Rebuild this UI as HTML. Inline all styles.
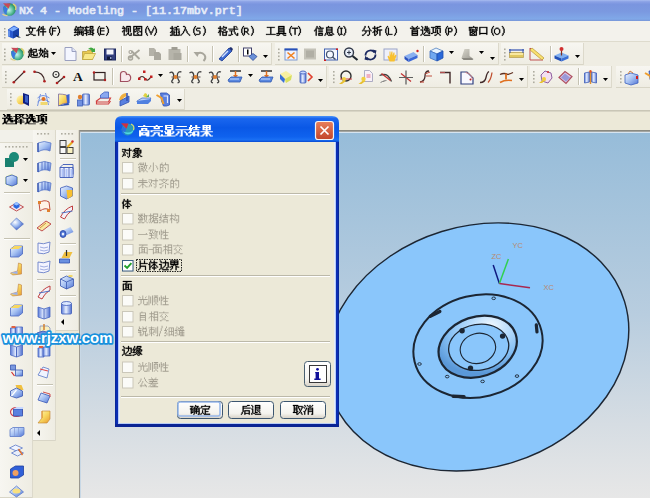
<!DOCTYPE html>
<html><head><meta charset="utf-8"><title>NX 4 - Modeling</title>
<style>html,body{margin:0;padding:0;width:650px;height:498px;overflow:hidden;background:#ece9d8;font-family:"Liberation Sans",sans-serif}</style>
</head><body><svg width="650" height="498" viewBox="0 0 650 498" style="display:block"><rect x="0" y="0" width="650" height="498" fill="#ece9d8"/><defs>
<linearGradient id="gTitle" x1="0" y1="0" x2="0" y2="1">
<stop offset="0" stop-color="#a8bcf0"/><stop offset="0.08" stop-color="#8ba2e6"/>
<stop offset="0.2" stop-color="#7a95df"/><stop offset="0.55" stop-color="#7b99e0"/>
<stop offset="0.9" stop-color="#80a8e8"/><stop offset="1" stop-color="#7896d8"/>
</linearGradient>
<linearGradient id="gView" x1="0" y1="0" x2="0" y2="1">
<stop offset="0" stop-color="#96bcd9"/><stop offset="0.5" stop-color="#b8cddf"/><stop offset="0.8" stop-color="#d6dde3"/><stop offset="1" stop-color="#e7e7e7"/>
</linearGradient>
<linearGradient id="gDlgTitle" x1="0" y1="0" x2="0" y2="1">
<stop offset="0" stop-color="#4a94f8"/><stop offset="0.1" stop-color="#1a66ee"/><stop offset="0.45" stop-color="#0a58e6"/><stop offset="0.8" stop-color="#0f62ee"/><stop offset="0.92" stop-color="#1a70f4"/><stop offset="1" stop-color="#0848d0"/>
</linearGradient>
<linearGradient id="gBtn" x1="0" y1="0" x2="0" y2="1">
<stop offset="0" stop-color="#ffffff"/><stop offset="0.7" stop-color="#f4f3ee"/><stop offset="1" stop-color="#d6d0c5"/>
</linearGradient>
<linearGradient id="gTb" x1="0" y1="0" x2="0" y2="1">
<stop offset="0" stop-color="#f7f6f1"/><stop offset="1" stop-color="#eeece2"/>
</linearGradient>
<linearGradient id="gTbV" x1="0" y1="0" x2="1" y2="0">
<stop offset="0" stop-color="#f7f6f1"/><stop offset="1" stop-color="#eeece2"/>
</linearGradient>
</defs><rect x="0" y="0" width="650" height="21" fill="url(#gTitle)"/><rect x="0" y="21" width="650" height="21" fill="#f3f2ec"/><rect x="0" y="41" width="650" height="1" fill="#dedbcd"/><rect x="0" y="42" width="650" height="69" fill="#efede3"/><rect x="0" y="111" width="650" height="19" fill="#ece9d8"/><rect x="0" y="110" width="650" height="1" fill="#c9c6b6"/><rect x="0" y="111" width="650" height="1" fill="#d8d5c5"/><rect x="0" y="130" width="80" height="368" fill="#ece9d8"/><rect x="80" y="130" width="570" height="368" fill="url(#gView)"/><rect x="79" y="130" width="571" height="1" fill="#8a8a82"/><rect x="79" y="131" width="571" height="1" fill="#a4a6a2"/><rect x="80" y="132" width="570" height="1" fill="#d6e4f0"/><rect x="79" y="130" width="1" height="368" fill="#9a9890"/><rect x="80" y="132" width="1" height="366" fill="#c8d8e6"/><rect x="2" y="43" width="270" height="22" fill="url(#gTb)"/><rect x="2" y="64" width="270" height="1" fill="#d8d5c6"/><rect x="271" y="43" width="1" height="22" fill="#dcd9cb"/><rect x="4" y="48.5" width="1.6" height="1.6" fill="#aeaca0"/><rect x="4" y="52.0" width="1.6" height="1.6" fill="#aeaca0"/><rect x="4" y="55.5" width="1.6" height="1.6" fill="#aeaca0"/><rect x="4" y="59.0" width="1.6" height="1.6" fill="#aeaca0"/><rect x="275" y="43" width="224" height="22" fill="url(#gTb)"/><rect x="275" y="64" width="224" height="1" fill="#d8d5c6"/><rect x="498" y="43" width="1" height="22" fill="#dcd9cb"/><rect x="278" y="48.5" width="1.6" height="1.6" fill="#aeaca0"/><rect x="278" y="52.0" width="1.6" height="1.6" fill="#aeaca0"/><rect x="278" y="55.5" width="1.6" height="1.6" fill="#aeaca0"/><rect x="278" y="59.0" width="1.6" height="1.6" fill="#aeaca0"/><rect x="501" y="43" width="83" height="22" fill="url(#gTb)"/><rect x="501" y="64" width="83" height="1" fill="#d8d5c6"/><rect x="583" y="43" width="1" height="22" fill="#dcd9cb"/><rect x="504" y="48.5" width="1.6" height="1.6" fill="#aeaca0"/><rect x="504" y="52.0" width="1.6" height="1.6" fill="#aeaca0"/><rect x="504" y="55.5" width="1.6" height="1.6" fill="#aeaca0"/><rect x="504" y="59.0" width="1.6" height="1.6" fill="#aeaca0"/><rect x="2" y="66" width="325" height="22" fill="url(#gTb)"/><rect x="2" y="87" width="325" height="1" fill="#d8d5c6"/><rect x="326" y="66" width="1" height="22" fill="#dcd9cb"/><rect x="5" y="71.0" width="1.6" height="1.6" fill="#aeaca0"/><rect x="5" y="74.5" width="1.6" height="1.6" fill="#aeaca0"/><rect x="5" y="78.0" width="1.6" height="1.6" fill="#aeaca0"/><rect x="5" y="81.5" width="1.6" height="1.6" fill="#aeaca0"/><rect x="329" y="66" width="199" height="22" fill="url(#gTb)"/><rect x="329" y="87" width="199" height="1" fill="#d8d5c6"/><rect x="527" y="66" width="1" height="22" fill="#dcd9cb"/><rect x="333" y="71.0" width="1.6" height="1.6" fill="#aeaca0"/><rect x="333" y="74.5" width="1.6" height="1.6" fill="#aeaca0"/><rect x="333" y="78.0" width="1.6" height="1.6" fill="#aeaca0"/><rect x="333" y="81.5" width="1.6" height="1.6" fill="#aeaca0"/><rect x="530" y="66" width="82" height="22" fill="url(#gTb)"/><rect x="530" y="87" width="82" height="1" fill="#d8d5c6"/><rect x="611" y="66" width="1" height="22" fill="#dcd9cb"/><rect x="533" y="71.0" width="1.6" height="1.6" fill="#aeaca0"/><rect x="533" y="74.5" width="1.6" height="1.6" fill="#aeaca0"/><rect x="533" y="78.0" width="1.6" height="1.6" fill="#aeaca0"/><rect x="533" y="81.5" width="1.6" height="1.6" fill="#aeaca0"/><rect x="616" y="66" width="40" height="22" fill="url(#gTb)"/><rect x="616" y="87" width="40" height="1" fill="#d8d5c6"/><rect x="655" y="66" width="1" height="22" fill="#dcd9cb"/><rect x="620" y="71.0" width="1.6" height="1.6" fill="#aeaca0"/><rect x="620" y="74.5" width="1.6" height="1.6" fill="#aeaca0"/><rect x="620" y="78.0" width="1.6" height="1.6" fill="#aeaca0"/><rect x="620" y="81.5" width="1.6" height="1.6" fill="#aeaca0"/><rect x="7" y="89" width="178" height="21" fill="url(#gTb)"/><rect x="7" y="109" width="178" height="1" fill="#d8d5c6"/><rect x="184" y="89" width="1" height="21" fill="#dcd9cb"/><rect x="10" y="93.0" width="1.6" height="1.6" fill="#aeaca0"/><rect x="10" y="96.5" width="1.6" height="1.6" fill="#aeaca0"/><rect x="10" y="100.0" width="1.6" height="1.6" fill="#aeaca0"/><rect x="10" y="103.5" width="1.6" height="1.6" fill="#aeaca0"/><rect x="121" y="46" width="1" height="16" fill="#c5c2b2"/><rect x="122" y="46" width="1" height="16" fill="#ffffff"/><rect x="187" y="46" width="1" height="16" fill="#c5c2b2"/><rect x="188" y="46" width="1" height="16" fill="#ffffff"/><rect x="212" y="46" width="1" height="16" fill="#c5c2b2"/><rect x="213" y="46" width="1" height="16" fill="#ffffff"/><rect x="238" y="46" width="1" height="16" fill="#c5c2b2"/><rect x="239" y="46" width="1" height="16" fill="#ffffff"/><rect x="423" y="46" width="1" height="16" fill="#c5c2b2"/><rect x="424" y="46" width="1" height="16" fill="#ffffff"/><rect x="550" y="46" width="1" height="16" fill="#c5c2b2"/><rect x="551" y="46" width="1" height="16" fill="#ffffff"/><rect x="112" y="68" width="1" height="17" fill="#c5c2b2"/><rect x="113" y="68" width="1" height="17" fill="#ffffff"/><rect x="578" y="68" width="1" height="17" fill="#c5c2b2"/><rect x="579" y="68" width="1" height="17" fill="#ffffff"/><rect x="0" y="130" width="33" height="13" fill="#f2f1ea"/><rect x="0" y="142" width="33" height="1" fill="#dddacc"/><rect x="0" y="143" width="33" height="355" fill="url(#gTbV)"/><rect x="0" y="497" width="33" height="1" fill="#d8d5c6"/><rect x="32" y="143" width="1" height="355" fill="#dcd9cb"/><rect x="5.0" y="146" width="1.6" height="1.6" fill="#aeaca0"/><rect x="8.5" y="146" width="1.6" height="1.6" fill="#aeaca0"/><rect x="12.0" y="146" width="1.6" height="1.6" fill="#aeaca0"/><rect x="15.5" y="146" width="1.6" height="1.6" fill="#aeaca0"/><rect x="19.0" y="146" width="1.6" height="1.6" fill="#aeaca0"/><rect x="22.5" y="146" width="1.6" height="1.6" fill="#aeaca0"/><rect x="26.0" y="146" width="1.6" height="1.6" fill="#aeaca0"/><rect x="33" y="130" width="23" height="311" fill="url(#gTbV)"/><rect x="33" y="440" width="23" height="1" fill="#d8d5c6"/><rect x="55" y="130" width="1" height="311" fill="#dcd9cb"/><rect x="37.0" y="133" width="1.6" height="1.6" fill="#aeaca0"/><rect x="40.5" y="133" width="1.6" height="1.6" fill="#aeaca0"/><rect x="44.0" y="133" width="1.6" height="1.6" fill="#aeaca0"/><rect x="47.5" y="133" width="1.6" height="1.6" fill="#aeaca0"/><rect x="56" y="130" width="23" height="201" fill="url(#gTbV)"/><rect x="56" y="330" width="23" height="1" fill="#d8d5c6"/><rect x="78" y="130" width="1" height="201" fill="#dcd9cb"/><rect x="61.0" y="133" width="1.6" height="1.6" fill="#aeaca0"/><rect x="64.5" y="133" width="1.6" height="1.6" fill="#aeaca0"/><rect x="68.0" y="133" width="1.6" height="1.6" fill="#aeaca0"/><rect x="71.5" y="133" width="1.6" height="1.6" fill="#aeaca0"/><rect x="4" y="192" width="26" height="1" fill="#c5c2b2"/><rect x="4" y="193" width="26" height="1" fill="#ffffff"/><rect x="4" y="238" width="26" height="1" fill="#c5c2b2"/><rect x="4" y="239" width="26" height="1" fill="#ffffff"/><rect x="37" y="279" width="16" height="1" fill="#c5c2b2"/><rect x="37" y="280" width="16" height="1" fill="#ffffff"/><rect x="37" y="384" width="16" height="1" fill="#c5c2b2"/><rect x="37" y="385" width="16" height="1" fill="#ffffff"/><rect x="60" y="158" width="16" height="1" fill="#c5c2b2"/><rect x="60" y="159" width="16" height="1" fill="#ffffff"/><rect x="60" y="243" width="16" height="1" fill="#c5c2b2"/><rect x="60" y="244" width="16" height="1" fill="#ffffff"/><rect x="60" y="270" width="16" height="1" fill="#c5c2b2"/><rect x="60" y="271" width="16" height="1" fill="#ffffff"/><rect x="60" y="295" width="16" height="1" fill="#c5c2b2"/><rect x="60" y="296" width="16" height="1" fill="#ffffff"/><defs>
<linearGradient id="gBlue" x1="0" y1="0" x2="1" y2="1"><stop offset="0" stop-color="#eef4ff"/><stop offset="0.5" stop-color="#a4c0f2"/><stop offset="1" stop-color="#5274d4"/></linearGradient>
<linearGradient id="gBlueH" x1="0" y1="0" x2="1" y2="0"><stop offset="0" stop-color="#5a7ad8"/><stop offset="0.45" stop-color="#e8f0ff"/><stop offset="1" stop-color="#5070d0"/></linearGradient>
<linearGradient id="gYel" x1="0" y1="0" x2="1" y2="1"><stop offset="0" stop-color="#fff8c0"/><stop offset="0.5" stop-color="#f8d860"/><stop offset="1" stop-color="#e89a30"/></linearGradient>
<linearGradient id="gGray" x1="0" y1="0" x2="1" y2="1"><stop offset="0" stop-color="#d8d6cc"/><stop offset="1" stop-color="#9a9890"/></linearGradient>
<radialGradient id="gSph" cx="0.35" cy="0.35" r="0.7"><stop offset="0" stop-color="#ffffff"/><stop offset="0.5" stop-color="#9ab8f0"/><stop offset="1" stop-color="#3858c0"/></radialGradient>
</defs><g transform="translate(10 47)"><defs><radialGradient id="gNx" cx="0.45" cy="0.55" r="0.6"><stop offset="0" stop-color="#c8f4f0"/><stop offset="0.6" stop-color="#50b890"/><stop offset="1" stop-color="#1a7a50"/></radialGradient></defs><circle cx="7.5" cy="7" r="6.3" fill="url(#gNx)"/><path d="M1.5 4q0 6 4 8.5q-3 -4 -1.5 -8z" fill="#2a68d0"/><path d="M1.5 4q-0.5 5 2.5 8q1 -4 2 -6z" fill="#3a78e0"/><path d="M1 0.8l7.5 0.3l-2 5.2z" fill="#c84858"/><path d="M11 1.5q4 2 2.5 6" stroke="#d8d070" stroke-width="1.4" fill="none"/><path d="M0.5 11.5q2 2 5 1.5" stroke="#e0d090" stroke-width="1.4" fill="none"/></g><g transform="translate(63.5 47)"><path d="M1.5 0.5h7l4 4v9h-11z" fill="#f4f6ff" stroke="#9aa0c0"/><path d="M8.5 0.5v4h4" fill="#dfe4f8" stroke="#9aa0c0"/></g><g transform="translate(82 47)"><path d="M0.5 4.5h4l1 -1h5v9h-10z" fill="#e8c850" stroke="#b8a040" stroke-width="0.8"/><path d="M0.5 12.5l2 -6h11l-3 6z" fill="#f8e888" stroke="#c0a840" stroke-width="0.8"/><path d="M6 2q3 -3 6 0l1 -1v4h-4l1 -1q-2 -2 -4 -2z" fill="#40a840"/></g><g transform="translate(104 48.5)"><rect x="0.5" y="0.5" width="11" height="11" fill="#34407e" stroke="#1c2860"/><rect x="2.5" y="1" width="7" height="5" fill="#f4f4fa"/><rect x="3" y="8" width="5" height="3.5" fill="#101838"/><rect x="6" y="8.5" width="1.5" height="2" fill="#90a0d0"/></g><g transform="translate(127.5 48)"><path d="M2 10l10 -8M4 3l8 8" stroke="#a8a69c" stroke-width="1.8"/><circle cx="3" cy="10" r="2" fill="none" stroke="#a8a69c" stroke-width="1.5"/><circle cx="3" cy="4" r="1.5" fill="none" stroke="#a8a69c" stroke-width="1.2"/></g><g transform="translate(149 48)"><path d="M0 0h5l2 2v6h-7z" fill="#b4b2a8"/><path d="M5 4h5l2 2v6h-7z" fill="#aaa89e"/></g><g transform="translate(168.5 47)"><rect x="0" y="2" width="12" height="11" fill="#b6b4aa"/><rect x="3" y="0" width="6" height="3" fill="#a09e94"/><rect x="5" y="6" width="8" height="7" fill="#aaa89e"/></g><g transform="translate(193.5 50)"><path d="M3 4q5 -3 8 1q2 3 -1 6" stroke="#a8a69c" stroke-width="2" fill="none"/><path d="M0 2l4 5l2 -5z" fill="#a8a69c"/></g><g transform="translate(218 47)"><path d="M1 12l3 2l10 -10l-3 -3z" fill="#3a68d0" stroke="#1a3890" stroke-width="0.8"/><path d="M4 10l6 -6" stroke="#d0e0ff" stroke-width="1.5"/><path d="M11 1l3 3l1 -2l-2 -2z" fill="#203070"/></g><g transform="translate(243 47.5)"><rect x="0.5" y="0.5" width="8" height="8" fill="#fff" stroke="#40406a"/><rect x="4" y="2" width="1.5" height="5" fill="#000"/><path d="M6 9l4 -3l4 3l-4 4z" fill="#6a90d8" stroke="#2a4a9a" stroke-width="0.8"/></g><g transform="translate(284.5 48.5)"><rect x="0.5" y="0.5" width="12" height="11" fill="#eef2ff" stroke="#7f9ad0"/><rect x="0" y="0" width="13" height="2" fill="#2850b8"/><path d="M3 4l7 6M10 4l-7 6" stroke="#f08020" stroke-width="1.6"/></g><g transform="translate(304 48.5)"><rect x="0" y="0" width="12" height="11" fill="#c4c2b8"/><rect x="2" y="2" width="8" height="7" fill="#b0aea4"/></g><g transform="translate(324 48.5)"><rect x="0.5" y="0.5" width="13" height="11" fill="#f4f8ff" stroke="#4060b0"/><circle cx="6" cy="6" r="3.5" fill="none" stroke="#40506a" stroke-width="1.2"/><path d="M8.5 8.5l3 2.5" stroke="#40506a" stroke-width="1.5"/><rect x="0" y="11" width="2" height="1.5" fill="#d02020"/><rect x="12" y="0" width="2" height="1.5" fill="#d02020"/></g><g transform="translate(343.5 47)"><circle cx="5.5" cy="5.5" r="4.5" fill="#e8eef8" stroke="#303848" stroke-width="1.4"/><path d="M9 9l5 4" stroke="#202830" stroke-width="2.2"/><path d="M3.5 5.5h4M5.5 3.5v4" stroke="#303848" stroke-width="1"/></g><g transform="translate(363.5 48.5)"><path d="M2 7a5 5 0 0 1 9 -3M12 6a5 5 0 0 1 -9 3" stroke="#1a2860" stroke-width="1.8" fill="none"/><path d="M9 1l4 1l-1 4z M5 12l-4 -1l1 -4z" fill="#1a2860"/></g><g transform="translate(383.5 48.5)"><rect x="0.5" y="0.5" width="13" height="11" fill="#eef0fa" stroke="#9aa4c8"/><path d="M6 13l-2 -5l1 -1l1 2v-6l1 0v4l1 -4l1 0v4l1 -3l1 0v4l1 -2l1 1l-2 6z" fill="#f8c030"/></g><g transform="translate(404.5 49)"><path d="M0 7l9 -4l4 3l-9 4z" fill="#8ab0f0"/><path d="M0 7l4 3v3l-4 -3z" fill="#2850c0"/><path d="M4 10l9 -4v3l-9 4z" fill="#3a68d8"/><circle cx="13" cy="2" r="1.2" fill="#d02020"/></g><g transform="translate(429 47)"><path d="M1 4l6 -3l7 3l-6 3z" fill="#e8f4ff" stroke="#5080c0" stroke-width="0.8"/><path d="M1 4v7l7 3v-7z" fill="#70a8f0" stroke="#4070c0" stroke-width="0.8"/><path d="M8 7v7l6 -3v-7z" fill="#2a68d8" stroke="#2050b0" stroke-width="0.8"/></g><g transform="translate(459.5 47)"><path d="M2 11l3 -9h5v7l4 3h-10z" fill="url(#gGray)"/><path d="M2 11h10l2 2h-10z" fill="#8a8880"/></g><g transform="translate(509 49)"><rect x="0.5" y="3.5" width="14" height="5" fill="#f8e8a0" stroke="#b8a050" stroke-width="0.8"/><path d="M0 1h15" stroke="#3050b0" stroke-width="1.2"/><path d="M1 0v4M14 0v4" stroke="#3050b0" stroke-width="1"/><rect x="1" y="6" width="13" height="2" fill="#e0c860"/></g><g transform="translate(529 47)"><path d="M1 13v-12l13 12z" fill="none" stroke="#c05050" stroke-width="1"/><path d="M3 1l12 10l-2 2l-12 -10z" fill="#f8e070" stroke="#c0a040" stroke-width="0.8"/></g><g transform="translate(554.5 46.5)"><path d="M0 9l7 -3l7 3l-7 3z" fill="#80b0f0"/><path d="M0 9v3l7 3v-3z" fill="#2050b8"/><path d="M7 12v3l7 -3v-3z" fill="#3a70d8"/><path d="M7 9v-6" stroke="#803020" stroke-width="1.2"/><circle cx="7" cy="2.5" r="2" fill="#d03030"/></g><g transform="translate(12 70)"><path d="M2 12l10 -10" stroke="#402828" stroke-width="1.1"/><circle cx="1.8" cy="12.2" r="1.3" fill="#b02020"/><circle cx="12.2" cy="1.8" r="1.3" fill="#b02020"/></g><g transform="translate(33 70)"><path d="M1.5 1.8q9 0 10 9.5" stroke="#402828" stroke-width="1.2" fill="none"/><circle cx="1.5" cy="1.8" r="1.3" fill="#b02020"/><circle cx="11.5" cy="11.3" r="1.3" fill="#b02020"/></g><g transform="translate(52 71)"><circle cx="4" cy="3.5" r="3" fill="none" stroke="#303030" stroke-width="1.2"/><circle cx="4" cy="3.5" r="0.8" fill="#303030"/><path d="M5 12l7 -6" stroke="#402828" stroke-width="1.2"/><circle cx="5" cy="12" r="1.3" fill="#b02020"/><circle cx="12" cy="6" r="1.3" fill="#b02020"/></g><g transform="translate(73 70)"><text x="0" y="10.5" font-family="Liberation Serif" font-weight="bold" font-size="13.5" fill="#101010">A</text></g><g transform="translate(92.5 71)"><rect x="1.5" y="1.5" width="11" height="7.5" fill="none" stroke="#302020" stroke-width="1.2"/><circle cx="1.5" cy="1.5" r="1.2" fill="#b02020"/><circle cx="12.5" cy="9" r="1.2" fill="#b02020"/></g><g transform="translate(118.5 70.5)"><path d="M2 11v-7q0 -3 3 -3q3 0 3 3q3 -1 4 2q1 4 -3 5z" fill="#f8e8ec" stroke="#a05060" stroke-width="1.2"/></g><g transform="translate(138 70.5)"><path d="M1 8q3 -4 6 0q3 4 6 -2" stroke="#402828" stroke-width="1.2" fill="none"/><rect x="0" y="7" width="2.5" height="2.5" fill="#c02020"/><rect x="6" y="7.5" width="2.5" height="2.5" fill="#c02020"/><rect x="12" y="5" width="2.5" height="2.5" fill="#c02020"/><rect x="5" y="0" width="2.5" height="2.5" fill="#c02020"/></g><g transform="translate(168.5 70)"><path d="M1 3q3 -2 4 1q1 4 -1 6q-2 2 1 3" stroke="#404040" stroke-width="1.3" fill="none"/><path d="M13 2q-3 -1 -4 2q-1 3 1 6q2 2 -1 3" stroke="#404040" stroke-width="1.3" fill="none"/><path d="M3 7h9" stroke="#605050" stroke-width="1"/><circle cx="7" cy="7" r="2" fill="#e08030"/></g><g transform="translate(188.5 70)"><path d="M1 3q3 -2 4 1q1 4 -1 6q-2 2 1 3" stroke="#404040" stroke-width="1.3" fill="none"/><path d="M13 2q-3 -1 -4 2q-1 3 1 6q2 2 -1 3" stroke="#404040" stroke-width="1.3" fill="none"/><path d="M3 7h9" stroke="#605050" stroke-width="1"/><circle cx="7" cy="7" r="2" fill="#e08030"/></g><g transform="translate(208 70)"><path d="M1 3q3 -2 4 1q1 4 -1 6q-2 2 1 3" stroke="#404040" stroke-width="1.3" fill="none"/><path d="M13 2q-3 -1 -4 2q-1 3 1 6q2 2 -1 3" stroke="#404040" stroke-width="1.3" fill="none"/><path d="M3 7h9" stroke="#605050" stroke-width="1"/><circle cx="7" cy="7" r="2" fill="#e08030"/></g><g transform="translate(228 70)"><path d="M2 1h11" stroke="#303030" stroke-width="1.5"/><path d="M7.5 1v5" stroke="#e07020" stroke-width="1.5"/><path d="M5 5l2.5 3l2.5 -3z" fill="#e07020"/><path d="M0 10l3 -3h11l-2 5h-11z" fill="#5a88e0" stroke="#3058b0" stroke-width="0.8"/><path d="M2 9h9" stroke="#c8dcff" stroke-width="1"/></g><g transform="translate(259 70)"><path d="M2 1h11" stroke="#303030" stroke-width="1.5"/><path d="M7.5 1v5" stroke="#e07020" stroke-width="1.5"/><path d="M5 5l2.5 3l2.5 -3z" fill="#e07020"/><path d="M0 10l3 -3h11l-2 5h-11z" fill="#5a88e0" stroke="#3058b0" stroke-width="0.8"/><path d="M2 9h9" stroke="#c8dcff" stroke-width="1"/></g><g transform="translate(279 70)"><path d="M1 4l6 -3l6 4l-6 8z" fill="#f8f0a0"/><path d="M1 4l5 5l-1 4l-4 -4z" fill="#3a70d8"/><path d="M6 9l7 -4l-1 5l-5 3z" fill="#d8e060"/></g><g transform="translate(299 70)"><rect x="1" y="2" width="6" height="11" rx="1" fill="url(#gBlueH)" stroke="#3a58b8" stroke-width="0.8"/><ellipse cx="4" cy="2.5" rx="3" ry="1.5" fill="#c8d8ff" stroke="#3a58b8" stroke-width="0.8"/><path d="M9 3l4 4l-4 4" stroke="#e04030" stroke-width="1.6" fill="none"/></g><g transform="translate(338 70)"><circle cx="8" cy="6" r="5" fill="none" stroke="#303030" stroke-width="1.4"/><path d="M2 9h12" stroke="#d04040" stroke-width="1"/><path d="M1 14l5 -4l2 1l-4 3z" fill="#e8c030"/><circle cx="6" cy="9" r="2" fill="#f0d040"/></g><g transform="translate(358.5 70)"><path d="M6 0.5h5l3 3v8h-8z" fill="#f8f0f8" stroke="#9a9ab8" stroke-width="0.8"/><rect x="8" y="4" width="4" height="4" fill="#f0b0c0"/><path d="M0 14l5 -4l2 1l-4 3z" fill="#e8c030"/><circle cx="5" cy="9" r="2.2" fill="#f0d040"/></g><g transform="translate(378.5 70.5)"><path d="M1 5q5 -2 8 0q3 3 4 6" stroke="#404040" stroke-width="1.3" fill="none"/><path d="M3 3l9 7" stroke="#c03030" stroke-width="1.3"/><path d="M2 12q3 -2 6 -2" stroke="#909090" stroke-width="1"/></g><g transform="translate(399 70.5)"><path d="M7 0v14" stroke="#606060" stroke-width="1.3"/><path d="M2 3l10 8" stroke="#c03030" stroke-width="1.3"/><path d="M0 7h14" stroke="#606060" stroke-width="1"/></g><g transform="translate(419 70)"><path d="M10 1q-4 0 -4 5q0 5 -5 6" stroke="#402828" stroke-width="1.3" fill="none"/><path d="M7 6h6M6 4l5 -2" stroke="#c05040" stroke-width="1"/><path d="M1 12h4" stroke="#c05040" stroke-width="1.2"/></g><g transform="translate(439 70.5)"><path d="M1 2h10v11" stroke="#402828" stroke-width="1.4" fill="none"/><path d="M1 2h5" stroke="#b05050" stroke-width="1.2"/></g><g transform="translate(459.5 70.5)"><path d="M1.5 1.5h6l6 6v6h-12z" fill="#f8f8ff" stroke="#304080" stroke-width="1.2"/><path d="M6 2q6 1 7 7" stroke="#d08080" stroke-width="1" fill="none"/><circle cx="11" cy="9" r="1" fill="#c02020"/></g><g transform="translate(479 70.5)"><path d="M1 12q5 0 6 -5q1 -5 3 -6" stroke="#402828" stroke-width="1.3" fill="none"/><path d="M9 12q3 -3 4 -10" stroke="#c05030" stroke-width="1.3" fill="none"/></g><g transform="translate(499 70.5)"><path d="M1 4q4 -2 8 0q3 -1 5 -2" stroke="#603020" stroke-width="1.3" fill="none"/><path d="M7 3v6" stroke="#e07020" stroke-width="1.8"/><path d="M1 12q5 -3 12 -2" stroke="#e07020" stroke-width="1.6" fill="none"/></g><g transform="translate(538 70)"><path d="M3 5l4 -4l6 2l1 5l-4 5l-6 -2z" fill="#f4e0f0" stroke="#9060a0" stroke-width="1"/><path d="M1 13l5 -4l2 1l-4 3z" fill="#e8c030"/><circle cx="6" cy="9" r="2" fill="#f0d040"/><circle cx="10" cy="2" r="1" fill="#d03030"/></g><g transform="translate(558 70.5)"><path d="M1 7l6 -6l7 5l-6 7z" fill="#d8c8e8" stroke="#b05060" stroke-width="1.2"/><path d="M3 7l4 -4l5 4l-4 4z" fill="#9a98d8"/></g><g transform="translate(583.5 70)"><path d="M1 3l5 -1v10l-5 1z" fill="url(#gBlueH)" stroke="#4060b8" stroke-width="0.8"/><path d="M8 2l5 1v10l-5 -1z" fill="url(#gBlueH)" stroke="#4060b8" stroke-width="0.8"/><path d="M7 0v14" stroke="#e09030" stroke-width="1.4"/><circle cx="7" cy="1.5" r="1.2" fill="#e05030"/></g><g transform="translate(624 70)"><path d="M1 5l6 -2l7 2v8l-7 2l-6 -2z" fill="url(#gBlue)" stroke="#3a60c0" stroke-width="0.8"/><path d="M4 4l2 -3l3 2" stroke="#d08040" stroke-width="1" fill="none"/><rect x="12" y="6" width="2" height="3" fill="#d02020"/></g><g transform="translate(645 70)"><path d="M4 1h6l3 2v10l-3 1h-3l-2 -5z" fill="#5a80e0" stroke="#3050b0" stroke-width="0.8"/><path d="M0 3l5 3l2 6" stroke="#f0a030" stroke-width="2" fill="none"/><path d="M7 4h4v7" stroke="#dfe8ff" stroke-width="1.2" fill="none"/></g><g transform="translate(16 92)"><circle cx="5" cy="8" r="4.5" fill="url(#gYel)"/><path d="M7 1l6 2v11l-6 -3z" fill="#102080"/><path d="M9 3l3 1v7l-3 -1z" fill="#3a60c8"/></g><g transform="translate(36.5 92)"><path d="M1 6q5 -5 12 0M1 10q5 -5 12 0M4 2l-3 12M9 1l3 12" stroke="#6a8ae0" stroke-width="0.9" fill="none"/><circle cx="7" cy="7" r="2" fill="#e07020"/><path d="M4 10h7v3h-7z" fill="#f0d870"/></g><g transform="translate(56.5 92)"><path d="M2 2q4 0 8 1l1 8q-4 0 -9 3z" fill="url(#gYel)" stroke="#7a6aa0" stroke-width="0.8"/><path d="M10 3l3 -1v9l-2 2z" fill="#3a60d0"/><path d="M2 14l9 -3l2 2l-9 1z" fill="#2850b0"/></g><g transform="translate(76.5 92)"><rect x="6" y="2" width="7" height="11" rx="1" fill="url(#gBlueH)" stroke="#4060b8" stroke-width="0.8"/><circle cx="3.5" cy="5" r="2.2" fill="#e08030"/><rect x="1" y="8" width="5" height="6" fill="#7090e0" stroke="#4060b8" stroke-width="0.8"/></g><g transform="translate(96.5 92)"><path d="M0 9l4 -3h10l-2 4h-11z" fill="none" stroke="#d04040" stroke-width="1.2"/><path d="M0 9v3h12l2 -3" fill="none" stroke="#d04040" stroke-width="1.2"/><path d="M4 3l4 -3h4v6h-8z" fill="#8aa8f0" stroke="#4060c0" stroke-width="0.8"/></g><g transform="translate(117 92)"><path d="M2 8q1 -6 7 -7l1 3q-4 1 -5 5z" fill="#f0b040"/><path d="M3 9l9 -5v6l-9 4z" fill="#5a80e0" stroke="#3050b0" stroke-width="0.8"/><path d="M10 1v8" stroke="#3050b0" stroke-width="1.5"/></g><g transform="translate(137 92)"><path d="M0 9l5 -3h9l-3 4h-11z" fill="#bcd0f8" stroke="#4a70c8" stroke-width="0.8"/><path d="M0 9v3h11l3 -3v-2" fill="#5080e0"/><path d="M6 4l2 -3l2 1v4z" fill="#e0d040"/><path d="M9 5l3 -3v3z" fill="#60b060"/></g><g transform="translate(156.5 92)"><path d="M4 1h6l3 2v10l-3 1h-3l-2 -5z" fill="#5a80e0" stroke="#3050b0" stroke-width="0.8"/><path d="M0 3l5 3l2 6" stroke="#f0a030" stroke-width="2" fill="none"/><path d="M7 4h4v7" stroke="#dfe8ff" stroke-width="1.2" fill="none"/></g><g transform="translate(5 152)"><rect x="0" y="6" width="9" height="9" fill="#1a8070"/><circle cx="9" cy="5" r="5" fill="#1a8a78"/></g><g transform="translate(5 173)"><path d="M0 4l6 -3l7 3v7l-7 3l-6 -3z" fill="#e0f0a0"/><path d="M1 4l6 -2l5 2v7l-5 2l-6 -2z" fill="url(#gBlue)" stroke="#3858b8" stroke-width="0.8"/></g><g transform="translate(9.5 198)"><path d="M0 9l7 -4l7 4l-7 4z" fill="#f4e8f0" stroke="#c05050" stroke-width="1"/><path d="M4 6l3 -2l3 2v3l-3 2l-3 -2z" fill="#2a68e0"/><path d="M4 6l3 -2l3 2l-3 1.5z" fill="#9ac0ff"/></g><g transform="translate(9.5 217)"><path d="M1 7l6 -6l7 6l-7 6z" fill="url(#gSph)" stroke="#5070c0" stroke-width="0.6"/></g><g transform="translate(9.5 244)"><path d="M1 5l4 -3h8v8l-4 3h-8z" fill="url(#gBlue)" stroke="#4a68c0" stroke-width="0.8"/><path d="M1 5l4 -3h8l-4 3z" fill="#f8d860"/></g><g transform="translate(9.5 262)"><path d="M9 1l3 1v10l-9 1l-2 -2l7 -2z" fill="url(#gYel)" stroke="#c08040" stroke-width="0.6"/><path d="M1 11l7 -2v3z" fill="#9ab0f0"/></g><g transform="translate(9.5 283)"><path d="M9 1l3 1v10l-9 1l-2 -2l7 -2z" fill="url(#gYel)" stroke="#c08040" stroke-width="0.6"/><path d="M1 11l7 -2v3z" fill="#9ab0f0"/></g><g transform="translate(9.5 303)"><path d="M1 5l4 -3h8v8l-4 3h-8z" fill="url(#gBlue)" stroke="#4a68c0" stroke-width="0.8"/><path d="M1 5l4 -3h8l-4 3z" fill="#f8d860"/></g><g transform="translate(9.5 323)"><path d="M1 5h6v9h-6z" fill="url(#gBlueH)" stroke="#4a68c0" stroke-width="0.8"/><path d="M6 4h7v9h-7z" fill="url(#gBlueH)" stroke="#4a68c0" stroke-width="0.8"/><path d="M2 3h4v2h-4z" fill="#e06040"/></g><g transform="translate(9.5 343)"><path d="M1 2l6 2l6 -2v10l-6 2l-6 -2z" fill="url(#gBlueH)" stroke="#4a68c0" stroke-width="0.8"/><path d="M7 4v10" stroke="#4a68c0" stroke-width="1"/></g><g transform="translate(9.5 363)"><path d="M1 2h5v5h-5z" fill="#7a98e0" stroke="#3a58b0" stroke-width="0.8"/><path d="M6 7h7v6h-7z" fill="url(#gBlue)" stroke="#3a58b0" stroke-width="0.8"/><path d="M2 9l3 4" stroke="#d03030" stroke-width="1.2"/></g><g transform="translate(9.5 384)"><path d="M6 1h6l2 5h-6z" fill="#f0c040"/><path d="M1 7l6 -3l6 3v5l-6 2l-6 -2z" fill="url(#gBlue)" stroke="#3a58b0" stroke-width="0.8"/><path d="M2 12l5 -6" stroke="#ffffff" stroke-width="1.2"/></g><g transform="translate(9.5 405)"><ellipse cx="7" cy="7" rx="6" ry="4.5" fill="none" stroke="#d04050" stroke-width="1.2"/><path d="M4 4h9v7h-9z" fill="#5a80e0" stroke="#3050b0" stroke-width="0.8"/><path d="M4 4l3 -2h7l-1 2z" fill="#c8d8ff"/></g><g transform="translate(9.5 425)"><path d="M0.5 4.5l3 -2h11v7l-3 2h-11z" fill="url(#gBlue)" stroke="#5a78c8" stroke-width="0.8"/><path d="M5 3v8M9 3v8" stroke="#8aa0d8" stroke-width="0.8"/></g><g transform="translate(9.5 444)"><path d="M0 4l6 -3l7 3l-6 3z" fill="#f0f4ff" stroke="#5a78c8" stroke-width="0.8"/><path d="M2 9l6 -3l6 3l-6 3z" fill="#e8eefa" stroke="#5a78c8" stroke-width="0.8"/><path d="M9 5l4 6" stroke="#e07030" stroke-width="1.4"/></g><g transform="translate(9.5 465)"><path d="M1 4l5 -3h8v9l-5 3h-8z" fill="#3060d8" stroke="#2040a0" stroke-width="0.8"/><circle cx="6" cy="8" r="3" fill="#f0a060"/></g><g transform="translate(9.5 484)"><path d="M0 8l7 -6l7 6l-7 5z" fill="url(#gBlue)" stroke="#5a78c8" stroke-width="0.8"/><ellipse cx="7" cy="7" rx="4" ry="2.5" fill="#f8e080"/></g><g transform="translate(37 140)"><path d="M1 3q6 -3 13 0l-1 8q-6 -3 -12 1z" fill="url(#gBlue)" stroke="#5a78c8" stroke-width="0.8"/><path d="M1 3q0 5 0 9" stroke="#2848a8" stroke-width="1.2"/></g><g transform="translate(37 160)"><path d="M1 3q6 -3 13 0l-1 8q-6 -3 -12 1z" fill="url(#gBlue)" stroke="#5a78c8" stroke-width="0.8"/><path d="M1 3q0 5 0 9" stroke="#2848a8" stroke-width="1.2"/><path d="M5 2v8M8 1.5v8M11 2v8" stroke="#3a58b8" stroke-width="0.7"/></g><g transform="translate(37 180)"><path d="M1 3q6 -3 13 0l-1 8q-6 -3 -12 1z" fill="url(#gBlue)" stroke="#5a78c8" stroke-width="0.8"/><path d="M1 3q0 5 0 9" stroke="#2848a8" stroke-width="1.2"/><path d="M5 2v8M8 1.5v8M11 2v8" stroke="#3a58b8" stroke-width="0.7"/></g><g transform="translate(37 199)"><path d="M2 4q5 -4 10 -1l1 8q-5 -3 -10 1z" fill="#fff4e8" stroke="#c05040" stroke-width="1"/><rect x="1" y="2" width="3" height="3" fill="#e08030"/><rect x="10" y="10" width="3" height="3" fill="#e08030"/></g><g transform="translate(37 219)"><path d="M0 9l9 -7l5 3l-9 7z" fill="#f8e8a0" stroke="#c05050" stroke-width="1"/><path d="M3 9l6 -5" stroke="#d09040" stroke-width="1"/></g><g transform="translate(37 241)"><path d="M1 2q5 2 12 -1l-1 10q-5 3 -11 1z" fill="#f4f4ff" stroke="#6a80c8" stroke-width="0.9"/><path d="M3 6q4 2 8 0M3 9q4 2 8 0" stroke="#8a9ad8" stroke-width="0.8" fill="none"/></g><g transform="translate(37 260)"><path d="M1 2q5 2 12 -1l-1 10q-5 3 -11 1z" fill="#f4f4ff" stroke="#6a80c8" stroke-width="0.9"/><path d="M3 6q4 2 8 0M3 9q4 2 8 0" stroke="#8a9ad8" stroke-width="0.8" fill="none"/></g><g transform="translate(37 285)"><path d="M1 12q4 -8 12 -11l0 4q-6 4 -8 9z" fill="#f4f0f8" stroke="#c04040" stroke-width="1"/><path d="M2 8l11 -2" stroke="#5070c0" stroke-width="1"/></g><g transform="translate(37 305)"><path d="M1 2l6 2l6 -2v10l-6 2l-6 -2z" fill="url(#gBlueH)" stroke="#4a68c0" stroke-width="0.8"/><path d="M7 4v10" stroke="#4a68c0" stroke-width="1"/></g><g transform="translate(37 324)"><path d="M3 2h8l2 2v6h-8l-2 -2z" fill="#f8f0c0" stroke="#8090c0" stroke-width="0.8"/><path d="M0 9l6 -2l7 2v3l-7 2l-6 -2z" fill="#7090e0" stroke="#3050b0" stroke-width="0.8"/><path d="M7 0v6" stroke="#d08030" stroke-width="1.5"/></g><g transform="translate(37 343)"><path d="M1 5h6v9h-6z" fill="url(#gBlueH)" stroke="#4a68c0" stroke-width="0.8"/><path d="M6 4h7v9h-7z" fill="url(#gBlueH)" stroke="#4a68c0" stroke-width="0.8"/><path d="M2 3h4v2h-4z" fill="#e06040"/></g><g transform="translate(37 365)"><path d="M1 10l5 -8l6 2l-2 9z" fill="#f0f4ff" stroke="#5a78c8" stroke-width="0.8"/><path d="M3 4l8 2" stroke="#e04040" stroke-width="1"/></g><g transform="translate(37 391)"><path d="M1 9l3 -7l9 3l-3 7z" fill="url(#gBlue)" stroke="#3a58b8" stroke-width="0.8"/><path d="M6 1l7 2v3" stroke="#d05050" stroke-width="1" fill="none"/></g><g transform="translate(37 410)"><path d="M5 1h8v8l-3 4h-9l4 -5z" fill="url(#gYel)" stroke="#c08030" stroke-width="0.6"/><path d="M5 1v7" stroke="#e09030" stroke-width="1"/></g><g transform="translate(59.5 140)"><rect x="0.5" y="0.5" width="6" height="6" fill="#f0f0f0" stroke="#404040"/><rect x="0.5" y="7.5" width="6" height="6" fill="#f8f8f8" stroke="#404040"/><rect x="7.5" y="7.5" width="6" height="6" fill="#f8f0c0" stroke="#404040"/><path d="M8 7l5 -5" stroke="#e8b020" stroke-width="2.2"/><circle cx="13" cy="1.5" r="1.2" fill="#d03030"/></g><g transform="translate(59.5 164)"><path d="M0.5 3.5h13v10h-13z" fill="#eef2ff" stroke="#3a58b8" stroke-width="0.9"/><path d="M4.5 3.5v10M9.5 3.5v10" stroke="#3a58b8" stroke-width="0.9"/><path d="M0.5 3.5l3 -3h10v10l-0 0" fill="none" stroke="#3a58b8" stroke-width="0.9"/><path d="M2 5h2v8h-2zM6 5h2v8h-2zM11 5h2v8h-2z" fill="#b0c4f8"/></g><g transform="translate(59.5 185)"><path d="M1 3l6 -2l6 2v8l-6 3l-6 -3z" fill="url(#gBlue)" stroke="#3a58b8" stroke-width="0.8"/><path d="M7 5h6v6l-5 3z" fill="#f8c030"/></g><g transform="translate(59.5 205)"><path d="M1 12q4 -8 12 -11l0 4q-6 4 -8 9z" fill="#f4f0f8" stroke="#c04040" stroke-width="1"/><path d="M2 8l11 -2" stroke="#5070c0" stroke-width="1"/></g><g transform="translate(59.5 225)"><path d="M2 6l9 -4l3 5l-9 4z" fill="url(#gBlue)"/><ellipse cx="3.5" cy="9" rx="3" ry="3.5" fill="#4a70d0" stroke="#2a48a8" stroke-width="0.8"/><ellipse cx="3.5" cy="9" rx="1.3" ry="1.6" fill="#e8f0ff"/></g><g transform="translate(59.5 250)"><path d="M2 8l3 -6h8l-3 6z" fill="#f0c040"/><path d="M0 9h10v4h-10z" fill="#6a90e0" stroke="#3050b0" stroke-width="0.8"/><path d="M7 0v6" stroke="#303030" stroke-width="1.2"/></g><g transform="translate(59.5 275)"><path d="M1 4l6 -3l7 3v7l-7 3l-6 -3z" fill="url(#gBlue)" stroke="#3a58b0" stroke-width="0.8"/><path d="M1 4l6 3l7 -3M7 7v7" stroke="#3a58b0" stroke-width="0.8" fill="none"/><path d="M9 1l4 0" stroke="#f0d040" stroke-width="1.5"/></g><g transform="translate(59.5 301)"><rect x="2" y="2" width="10" height="11" rx="1" fill="url(#gBlueH)" stroke="#3a58b8" stroke-width="0.8"/><ellipse cx="7" cy="2.5" rx="5" ry="2" fill="#dce8ff" stroke="#3a58b8" stroke-width="0.8"/></g><path d="M51 52h5l-2.5 3z" fill="#000"/><path d="M263 55h5l-2.5 3z" fill="#000"/><path d="M449 51h5l-2.5 3z" fill="#000"/><path d="M479 51h5l-2.5 3z" fill="#000"/><path d="M490 57h5l-2.5 3z" fill="#000"/><path d="M575 55h5l-2.5 3z" fill="#000"/><path d="M158 74h5l-2.5 3z" fill="#000"/><path d="M248 74h5l-2.5 3z" fill="#000"/><path d="M318 79h5l-2.5 3z" fill="#000"/><path d="M519 78h5l-2.5 3z" fill="#000"/><path d="M603 78h5l-2.5 3z" fill="#000"/><path d="M177 99h5l-2.5 3z" fill="#000"/><path d="M23 158h5l-2.5 3z" fill="#000"/><path d="M23 179h5l-2.5 3z" fill="#000"/><path d="M64 319v6l-3 -3z" fill="#000"/><path d="M40 430v6l-3 -3z" fill="#000"/><path fill="#000" stroke="#000" stroke-width="0.3"  transform="translate(26.00 24.25) scale(0.875)" d="M4 2h1v1h-1zM15 2h1v1h-1zM19 2h1v1h-1zM5 3h1v1h-1zM15 3h1v1h-1zM17 3h1v1h-1zM19 3h1v1h-1zM0 4h11v1h-11zM14 4h1v1h-1zM17 4h1v1h-1zM19 4h1v1h-1zM3 5h1v1h-1zM7 5h1v1h-1zM14 5h1v1h-1zM16 5h6v1h-6zM3 6h1v1h-1zM7 6h1v1h-1zM13 6h3v1h-3zM19 6h1v1h-1zM3 7h1v1h-1zM7 7h1v1h-1zM12 7h1v1h-1zM14 7h1v1h-1zM19 7h1v1h-1zM4 8h1v1h-1zM6 8h1v1h-1zM14 8h1v1h-1zM16 8h7v1h-7zM4 9h1v1h-1zM6 9h1v1h-1zM14 9h1v1h-1zM19 9h1v1h-1zM5 10h1v1h-1zM14 10h1v1h-1zM19 10h1v1h-1zM3 11h2v1h-2zM6 11h2v1h-2zM14 11h1v1h-1zM19 11h1v1h-1zM0 12h3v1h-3zM8 12h3v1h-3zM14 12h1v1h-1zM19 12h1v1h-1z"/><path fill="#000" stroke="#000" stroke-width="0.3"  transform="translate(48.50 24.25) scale(0.875)" d="M3 2h1v1h-1zM10 2h1v1h-1zM2 3h1v1h-1zM11 3h1v1h-1zM2 4h1v1h-1zM4 4h5v1h-5zM11 4h1v1h-1zM1 5h1v1h-1zM4 5h1v1h-1zM12 5h1v1h-1zM1 6h1v1h-1zM4 6h1v1h-1zM12 6h1v1h-1zM1 7h1v1h-1zM4 7h4v1h-4zM12 7h1v1h-1zM1 8h1v1h-1zM4 8h1v1h-1zM12 8h1v1h-1zM1 9h1v1h-1zM4 9h1v1h-1zM12 9h1v1h-1zM2 10h1v1h-1zM4 10h1v1h-1zM11 10h1v1h-1zM2 11h1v1h-1zM4 11h1v1h-1zM11 11h1v1h-1zM3 12h1v1h-1zM10 12h1v1h-1z"/><path fill="#000" stroke="#000" stroke-width="0.3"  transform="translate(74.00 24.25) scale(0.875)" d="M2 2h1v1h-1zM7 2h1v1h-1zM14 2h1v1h-1zM18 2h4v1h-4zM2 3h1v1h-1zM4 3h7v1h-7zM12 3h5v1h-5zM18 3h1v1h-1zM21 3h1v1h-1zM1 4h1v1h-1zM4 4h1v1h-1zM10 4h1v1h-1zM13 4h1v1h-1zM18 4h4v1h-4zM1 5h1v1h-1zM3 5h8v1h-8zM13 5h2v1h-2zM0 6h3v1h-3zM4 6h1v1h-1zM12 6h1v1h-1zM14 6h1v1h-1zM17 6h6v1h-6zM2 7h1v1h-1zM4 7h7v1h-7zM12 7h5v1h-5zM18 7h1v1h-1zM21 7h1v1h-1zM1 8h1v1h-1zM4 8h1v1h-1zM6 8h1v1h-1zM8 8h1v1h-1zM10 8h1v1h-1zM14 8h1v1h-1zM18 8h2v1h-2zM21 8h1v1h-1zM0 9h11v1h-11zM14 9h3v1h-3zM18 9h1v1h-1zM20 9h2v1h-2zM4 10h1v1h-1zM6 10h1v1h-1zM8 10h1v1h-1zM10 10h1v1h-1zM12 10h3v1h-3zM18 10h1v1h-1zM21 10h2v1h-2zM2 11h3v1h-3zM6 11h1v1h-1zM8 11h1v1h-1zM10 11h1v1h-1zM14 11h1v1h-1zM16 11h6v1h-6zM0 12h2v1h-2zM4 12h1v1h-1zM9 12h2v1h-2zM14 12h1v1h-1zM21 12h1v1h-1z"/><path fill="#000" stroke="#000" stroke-width="0.3"  transform="translate(96.50 24.25) scale(0.875)" d="M3 2h1v1h-1zM11 2h1v1h-1zM2 3h1v1h-1zM12 3h1v1h-1zM2 4h1v1h-1zM4 4h5v1h-5zM12 4h1v1h-1zM1 5h1v1h-1zM4 5h1v1h-1zM13 5h1v1h-1zM1 6h1v1h-1zM4 6h1v1h-1zM13 6h1v1h-1zM1 7h1v1h-1zM4 7h5v1h-5zM13 7h1v1h-1zM1 8h1v1h-1zM4 8h1v1h-1zM13 8h1v1h-1zM1 9h1v1h-1zM4 9h1v1h-1zM13 9h1v1h-1zM2 10h1v1h-1zM4 10h1v1h-1zM12 10h1v1h-1zM2 11h1v1h-1zM4 11h5v1h-5zM12 11h1v1h-1zM3 12h1v1h-1zM11 12h1v1h-1z"/><path fill="#000" stroke="#000" stroke-width="0.3"  transform="translate(122.00 24.25) scale(0.875)" d="M1 2h1v1h-1zM5 2h5v1h-5zM13 2h10v1h-10zM2 3h1v1h-1zM5 3h1v1h-1zM9 3h1v1h-1zM13 3h1v1h-1zM16 3h1v1h-1zM22 3h1v1h-1zM0 4h4v1h-4zM5 4h1v1h-1zM7 4h1v1h-1zM9 4h1v1h-1zM13 4h1v1h-1zM16 4h5v1h-5zM22 4h1v1h-1zM3 5h1v1h-1zM5 5h1v1h-1zM7 5h1v1h-1zM9 5h1v1h-1zM13 5h1v1h-1zM15 5h2v1h-2zM19 5h1v1h-1zM22 5h1v1h-1zM2 6h1v1h-1zM5 6h1v1h-1zM7 6h1v1h-1zM9 6h1v1h-1zM13 6h2v1h-2zM17 6h2v1h-2zM22 6h1v1h-1zM1 7h3v1h-3zM5 7h1v1h-1zM7 7h1v1h-1zM9 7h1v1h-1zM13 7h1v1h-1zM16 7h1v1h-1zM19 7h1v1h-1zM22 7h1v1h-1zM0 8h1v1h-1zM2 8h1v1h-1zM5 8h1v1h-1zM7 8h1v1h-1zM9 8h1v1h-1zM13 8h3v1h-3zM17 8h1v1h-1zM20 8h3v1h-3zM2 9h1v1h-1zM7 9h1v1h-1zM13 9h1v1h-1zM18 9h1v1h-1zM22 9h1v1h-1zM2 10h1v1h-1zM6 10h2v1h-2zM10 10h1v1h-1zM13 10h1v1h-1zM17 10h1v1h-1zM22 10h1v1h-1zM2 11h1v1h-1zM5 11h1v1h-1zM7 11h1v1h-1zM10 11h1v1h-1zM13 11h1v1h-1zM18 11h1v1h-1zM22 11h1v1h-1zM2 12h1v1h-1zM4 12h1v1h-1zM8 12h3v1h-3zM13 12h10v1h-10z"/><path fill="#000" stroke="#000" stroke-width="0.3"  transform="translate(144.50 24.25) scale(0.875)" d="M3 2h1v1h-1zM11 2h1v1h-1zM2 3h1v1h-1zM12 3h1v1h-1zM2 4h1v1h-1zM4 4h1v1h-1zM10 4h1v1h-1zM12 4h1v1h-1zM1 5h1v1h-1zM4 5h1v1h-1zM10 5h1v1h-1zM13 5h1v1h-1zM1 6h1v1h-1zM5 6h1v1h-1zM9 6h1v1h-1zM13 6h1v1h-1zM1 7h1v1h-1zM5 7h1v1h-1zM9 7h1v1h-1zM13 7h1v1h-1zM1 8h1v1h-1zM6 8h1v1h-1zM8 8h1v1h-1zM13 8h1v1h-1zM1 9h1v1h-1zM6 9h1v1h-1zM8 9h1v1h-1zM13 9h1v1h-1zM2 10h1v1h-1zM7 10h1v1h-1zM12 10h1v1h-1zM2 11h1v1h-1zM7 11h1v1h-1zM12 11h1v1h-1zM3 12h1v1h-1zM11 12h1v1h-1z"/><path fill="#000" stroke="#000" stroke-width="0.3"  transform="translate(170.00 24.25) scale(0.875)" d="M2 2h1v1h-1zM8 2h2v1h-2zM15 2h2v1h-2zM2 3h1v1h-1zM5 3h3v1h-3zM17 3h1v1h-1zM0 4h4v1h-4zM7 4h1v1h-1zM17 4h1v1h-1zM2 5h1v1h-1zM4 5h7v1h-7zM17 5h1v1h-1zM2 6h1v1h-1zM7 6h1v1h-1zM16 6h1v1h-1zM18 6h1v1h-1zM2 7h2v1h-2zM5 7h1v1h-1zM7 7h1v1h-1zM9 7h2v1h-2zM16 7h1v1h-1zM18 7h1v1h-1zM1 8h2v1h-2zM4 8h1v1h-1zM7 8h1v1h-1zM10 8h1v1h-1zM15 8h1v1h-1zM19 8h1v1h-1zM0 9h1v1h-1zM2 9h1v1h-1zM4 9h2v1h-2zM7 9h1v1h-1zM9 9h2v1h-2zM15 9h1v1h-1zM19 9h1v1h-1zM2 10h1v1h-1zM4 10h1v1h-1zM7 10h1v1h-1zM10 10h1v1h-1zM14 10h1v1h-1zM20 10h1v1h-1zM2 11h1v1h-1zM4 11h1v1h-1zM7 11h1v1h-1zM10 11h1v1h-1zM13 11h1v1h-1zM21 11h1v1h-1zM0 12h3v1h-3zM4 12h7v1h-7zM12 12h1v1h-1zM22 12h1v1h-1z"/><path fill="#000" stroke="#000" stroke-width="0.3"  transform="translate(192.50 24.25) scale(0.875)" d="M3 2h1v1h-1zM12 2h1v1h-1zM2 3h1v1h-1zM13 3h1v1h-1zM2 4h1v1h-1zM5 4h4v1h-4zM13 4h1v1h-1zM1 5h1v1h-1zM4 5h1v1h-1zM14 5h1v1h-1zM1 6h1v1h-1zM4 6h1v1h-1zM14 6h1v1h-1zM1 7h1v1h-1zM5 7h3v1h-3zM14 7h1v1h-1zM1 8h1v1h-1zM8 8h1v1h-1zM14 8h1v1h-1zM1 9h1v1h-1zM8 9h1v1h-1zM14 9h1v1h-1zM2 10h1v1h-1zM8 10h1v1h-1zM13 10h1v1h-1zM2 11h1v1h-1zM4 11h4v1h-4zM13 11h1v1h-1zM3 12h1v1h-1zM12 12h1v1h-1z"/><path fill="#000" stroke="#000" stroke-width="0.3"  transform="translate(218.00 24.25) scale(0.875)" d="M2 2h1v1h-1zM6 2h1v1h-1zM18 2h1v1h-1zM20 2h1v1h-1zM2 3h1v1h-1zM6 3h4v1h-4zM18 3h1v1h-1zM21 3h1v1h-1zM0 4h4v1h-4zM5 4h1v1h-1zM9 4h1v1h-1zM18 4h1v1h-1zM2 5h1v1h-1zM4 5h1v1h-1zM6 5h1v1h-1zM8 5h1v1h-1zM12 5h11v1h-11zM2 6h1v1h-1zM7 6h1v1h-1zM18 6h1v1h-1zM1 7h3v1h-3zM6 7h1v1h-1zM8 7h1v1h-1zM13 7h4v1h-4zM18 7h1v1h-1zM1 8h2v1h-2zM4 8h2v1h-2zM9 8h2v1h-2zM15 8h1v1h-1zM18 8h1v1h-1zM0 9h1v1h-1zM2 9h1v1h-1zM5 9h5v1h-5zM15 9h1v1h-1zM19 9h1v1h-1zM2 10h1v1h-1zM5 10h1v1h-1zM9 10h1v1h-1zM15 10h1v1h-1zM19 10h1v1h-1zM22 10h1v1h-1zM2 11h1v1h-1zM5 11h1v1h-1zM9 11h1v1h-1zM15 11h2v1h-2zM20 11h1v1h-1zM22 11h1v1h-1zM2 12h1v1h-1zM5 12h5v1h-5zM12 12h3v1h-3zM21 12h2v1h-2z"/><path fill="#000" stroke="#000" stroke-width="0.3"  transform="translate(240.50 24.25) scale(0.875)" d="M3 2h1v1h-1zM12 2h1v1h-1zM2 3h1v1h-1zM13 3h1v1h-1zM2 4h1v1h-1zM4 4h4v1h-4zM13 4h1v1h-1zM1 5h1v1h-1zM4 5h1v1h-1zM8 5h1v1h-1zM14 5h1v1h-1zM1 6h1v1h-1zM4 6h1v1h-1zM8 6h1v1h-1zM14 6h1v1h-1zM1 7h1v1h-1zM4 7h1v1h-1zM8 7h1v1h-1zM14 7h1v1h-1zM1 8h1v1h-1zM4 8h4v1h-4zM14 8h1v1h-1zM1 9h1v1h-1zM4 9h1v1h-1zM7 9h1v1h-1zM14 9h1v1h-1zM2 10h1v1h-1zM4 10h1v1h-1zM8 10h1v1h-1zM13 10h1v1h-1zM2 11h1v1h-1zM4 11h1v1h-1zM9 11h1v1h-1zM13 11h1v1h-1zM3 12h1v1h-1zM12 12h1v1h-1z"/><path fill="#000" stroke="#000" stroke-width="0.3"  transform="translate(266.00 24.25) scale(0.875)" d="M14 2h7v1h-7zM1 3h9v1h-9zM14 3h1v1h-1zM20 3h1v1h-1zM5 4h1v1h-1zM14 4h7v1h-7zM5 5h1v1h-1zM14 5h1v1h-1zM20 5h1v1h-1zM5 6h1v1h-1zM14 6h7v1h-7zM5 7h1v1h-1zM14 7h1v1h-1zM20 7h1v1h-1zM5 8h1v1h-1zM14 8h7v1h-7zM5 9h1v1h-1zM14 9h1v1h-1zM20 9h1v1h-1zM5 10h1v1h-1zM12 10h11v1h-11zM0 11h11v1h-11zM15 11h1v1h-1zM19 11h1v1h-1zM12 12h3v1h-3zM20 12h3v1h-3z"/><path fill="#000" stroke="#000" stroke-width="0.3"  transform="translate(288.50 24.25) scale(0.875)" d="M3 2h1v1h-1zM11 2h1v1h-1zM2 3h1v1h-1zM12 3h1v1h-1zM2 4h1v1h-1zM4 4h7v1h-7zM12 4h1v1h-1zM1 5h1v1h-1zM7 5h1v1h-1zM13 5h1v1h-1zM1 6h1v1h-1zM7 6h1v1h-1zM13 6h1v1h-1zM1 7h1v1h-1zM7 7h1v1h-1zM13 7h1v1h-1zM1 8h1v1h-1zM7 8h1v1h-1zM13 8h1v1h-1zM1 9h1v1h-1zM7 9h1v1h-1zM13 9h1v1h-1zM2 10h1v1h-1zM7 10h1v1h-1zM12 10h1v1h-1zM2 11h1v1h-1zM7 11h1v1h-1zM12 11h1v1h-1zM3 12h1v1h-1zM11 12h1v1h-1z"/><path fill="#000" stroke="#000" stroke-width="0.3"  transform="translate(314.00 24.25) scale(0.875)" d="M3 2h1v1h-1zM6 2h1v1h-1zM16 2h1v1h-1zM3 3h1v1h-1zM7 3h1v1h-1zM14 3h7v1h-7zM2 4h1v1h-1zM4 4h7v1h-7zM14 4h1v1h-1zM20 4h1v1h-1zM2 5h1v1h-1zM14 5h7v1h-7zM1 6h2v1h-2zM5 6h5v1h-5zM14 6h1v1h-1zM20 6h1v1h-1zM0 7h1v1h-1zM2 7h1v1h-1zM14 7h7v1h-7zM2 8h1v1h-1zM5 8h5v1h-5zM14 8h1v1h-1zM20 8h1v1h-1zM2 9h1v1h-1zM14 9h7v1h-7zM2 10h1v1h-1zM5 10h5v1h-5zM13 10h1v1h-1zM15 10h1v1h-1zM17 10h1v1h-1zM21 10h1v1h-1zM2 11h1v1h-1zM5 11h1v1h-1zM9 11h1v1h-1zM13 11h1v1h-1zM15 11h1v1h-1zM18 11h1v1h-1zM20 11h1v1h-1zM22 11h1v1h-1zM2 12h1v1h-1zM5 12h5v1h-5zM12 12h1v1h-1zM16 12h5v1h-5z"/><path fill="#000" stroke="#000" stroke-width="0.3"  transform="translate(336.50 24.25) scale(0.875)" d="M3 2h1v1h-1zM8 2h1v1h-1zM2 3h1v1h-1zM9 3h1v1h-1zM2 4h1v1h-1zM4 4h3v1h-3zM9 4h1v1h-1zM1 5h1v1h-1zM5 5h1v1h-1zM10 5h1v1h-1zM1 6h1v1h-1zM5 6h1v1h-1zM10 6h1v1h-1zM1 7h1v1h-1zM5 7h1v1h-1zM10 7h1v1h-1zM1 8h1v1h-1zM5 8h1v1h-1zM10 8h1v1h-1zM1 9h1v1h-1zM5 9h1v1h-1zM10 9h1v1h-1zM2 10h1v1h-1zM5 10h1v1h-1zM9 10h1v1h-1zM2 11h1v1h-1zM4 11h3v1h-3zM9 11h1v1h-1zM3 12h1v1h-1zM8 12h1v1h-1z"/><path fill="#000" stroke="#000" stroke-width="0.3"  transform="translate(362.00 24.25) scale(0.875)" d="M3 2h1v1h-1zM7 2h1v1h-1zM14 2h1v1h-1zM20 2h2v1h-2zM3 3h1v1h-1zM7 3h1v1h-1zM14 3h1v1h-1zM17 3h3v1h-3zM2 4h1v1h-1zM8 4h1v1h-1zM12 4h6v1h-6zM2 5h1v1h-1zM8 5h1v1h-1zM14 5h1v1h-1zM17 5h1v1h-1zM1 6h1v1h-1zM9 6h1v1h-1zM14 6h1v1h-1zM17 6h6v1h-6zM0 7h1v1h-1zM2 7h7v1h-7zM10 7h1v1h-1zM14 7h2v1h-2zM17 7h1v1h-1zM20 7h1v1h-1zM4 8h1v1h-1zM8 8h1v1h-1zM13 8h2v1h-2zM16 8h2v1h-2zM20 8h1v1h-1zM4 9h1v1h-1zM8 9h1v1h-1zM12 9h1v1h-1zM14 9h1v1h-1zM17 9h1v1h-1zM20 9h1v1h-1zM3 10h1v1h-1zM8 10h1v1h-1zM14 10h1v1h-1zM17 10h1v1h-1zM20 10h1v1h-1zM2 11h1v1h-1zM8 11h1v1h-1zM14 11h1v1h-1zM16 11h1v1h-1zM20 11h1v1h-1zM0 12h2v1h-2zM6 12h2v1h-2zM14 12h2v1h-2zM20 12h1v1h-1z"/><path fill="#000" stroke="#000" stroke-width="0.3"  transform="translate(384.50 24.25) scale(0.875)" d="M3 2h1v1h-1zM11 2h1v1h-1zM2 3h1v1h-1zM12 3h1v1h-1zM2 4h1v1h-1zM4 4h1v1h-1zM12 4h1v1h-1zM1 5h1v1h-1zM4 5h1v1h-1zM13 5h1v1h-1zM1 6h1v1h-1zM4 6h1v1h-1zM13 6h1v1h-1zM1 7h1v1h-1zM4 7h1v1h-1zM13 7h1v1h-1zM1 8h1v1h-1zM4 8h1v1h-1zM13 8h1v1h-1zM1 9h1v1h-1zM4 9h1v1h-1zM13 9h1v1h-1zM2 10h1v1h-1zM4 10h1v1h-1zM12 10h1v1h-1zM2 11h1v1h-1zM4 11h5v1h-5zM12 11h1v1h-1zM3 12h1v1h-1zM11 12h1v1h-1z"/><path fill="#000" stroke="#000" stroke-width="0.3"  transform="translate(410.00 24.25) scale(0.875)" d="M2 2h1v1h-1zM8 2h1v1h-1zM13 2h1v1h-1zM17 2h1v1h-1zM19 2h1v1h-1zM29 2h6v1h-6zM3 3h1v1h-1zM7 3h1v1h-1zM14 3h1v1h-1zM17 3h1v1h-1zM19 3h1v1h-1zM24 3h5v1h-5zM31 3h1v1h-1zM0 4h11v1h-11zM14 4h1v1h-1zM17 4h5v1h-5zM26 4h1v1h-1zM29 4h6v1h-6zM4 5h1v1h-1zM16 5h1v1h-1zM19 5h1v1h-1zM26 5h1v1h-1zM29 5h1v1h-1zM34 5h1v1h-1zM2 6h7v1h-7zM12 6h3v1h-3zM16 6h7v1h-7zM26 6h1v1h-1zM29 6h1v1h-1zM31 6h1v1h-1zM34 6h1v1h-1zM2 7h1v1h-1zM8 7h1v1h-1zM14 7h1v1h-1zM18 7h1v1h-1zM20 7h1v1h-1zM26 7h1v1h-1zM29 7h1v1h-1zM31 7h1v1h-1zM34 7h1v1h-1zM2 8h7v1h-7zM14 8h1v1h-1zM18 8h1v1h-1zM20 8h1v1h-1zM22 8h1v1h-1zM26 8h1v1h-1zM29 8h1v1h-1zM31 8h1v1h-1zM34 8h1v1h-1zM2 9h1v1h-1zM8 9h1v1h-1zM14 9h1v1h-1zM17 9h1v1h-1zM20 9h1v1h-1zM22 9h1v1h-1zM26 9h4v1h-4zM31 9h1v1h-1zM34 9h1v1h-1zM2 10h7v1h-7zM14 10h1v1h-1zM16 10h1v1h-1zM21 10h2v1h-2zM24 10h2v1h-2zM31 10h2v1h-2zM2 11h1v1h-1zM8 11h1v1h-1zM13 11h1v1h-1zM15 11h1v1h-1zM30 11h1v1h-1zM33 11h1v1h-1zM2 12h7v1h-7zM12 12h1v1h-1zM16 12h7v1h-7zM28 12h2v1h-2zM34 12h1v1h-1z"/><path fill="#000" stroke="#000" stroke-width="0.3"  transform="translate(444.50 24.25) scale(0.875)" d="M3 2h1v1h-1zM11 2h1v1h-1zM2 3h1v1h-1zM12 3h1v1h-1zM2 4h1v1h-1zM4 4h4v1h-4zM12 4h1v1h-1zM1 5h1v1h-1zM4 5h1v1h-1zM8 5h1v1h-1zM13 5h1v1h-1zM1 6h1v1h-1zM4 6h1v1h-1zM8 6h1v1h-1zM13 6h1v1h-1zM1 7h1v1h-1zM4 7h1v1h-1zM8 7h1v1h-1zM13 7h1v1h-1zM1 8h1v1h-1zM4 8h4v1h-4zM13 8h1v1h-1zM1 9h1v1h-1zM4 9h1v1h-1zM13 9h1v1h-1zM2 10h1v1h-1zM4 10h1v1h-1zM12 10h1v1h-1zM2 11h1v1h-1zM4 11h1v1h-1zM12 11h1v1h-1zM3 12h1v1h-1zM11 12h1v1h-1z"/><path fill="#000" stroke="#000" stroke-width="0.3"  transform="translate(468.00 24.25) scale(0.875)" d="M6 2h1v1h-1zM1 3h10v1h-10zM13 3h9v1h-9zM1 4h1v1h-1zM3 4h1v1h-1zM8 4h1v1h-1zM10 4h1v1h-1zM13 4h1v1h-1zM21 4h1v1h-1zM2 5h1v1h-1zM5 5h1v1h-1zM9 5h1v1h-1zM13 5h1v1h-1zM21 5h1v1h-1zM1 6h10v1h-10zM13 6h1v1h-1zM21 6h1v1h-1zM2 7h1v1h-1zM5 7h1v1h-1zM9 7h1v1h-1zM13 7h1v1h-1zM21 7h1v1h-1zM2 8h1v1h-1zM4 8h6v1h-6zM13 8h1v1h-1zM21 8h1v1h-1zM2 9h3v1h-3zM7 9h1v1h-1zM9 9h1v1h-1zM13 9h1v1h-1zM21 9h1v1h-1zM2 10h1v1h-1zM5 10h2v1h-2zM9 10h1v1h-1zM13 10h9v1h-9zM2 11h1v1h-1zM4 11h1v1h-1zM7 11h1v1h-1zM9 11h1v1h-1zM13 11h1v1h-1zM21 11h1v1h-1zM2 12h8v1h-8z"/><path fill="#000" stroke="#000" stroke-width="0.3"  transform="translate(490.50 24.25) scale(0.875)" d="M3 2h1v1h-1zM13 2h1v1h-1zM2 3h1v1h-1zM14 3h1v1h-1zM2 4h1v1h-1zM6 4h3v1h-3zM14 4h1v1h-1zM1 5h1v1h-1zM5 5h1v1h-1zM9 5h1v1h-1zM15 5h1v1h-1zM1 6h1v1h-1zM4 6h1v1h-1zM10 6h1v1h-1zM15 6h1v1h-1zM1 7h1v1h-1zM4 7h1v1h-1zM10 7h1v1h-1zM15 7h1v1h-1zM1 8h1v1h-1zM4 8h1v1h-1zM10 8h1v1h-1zM15 8h1v1h-1zM1 9h1v1h-1zM4 9h1v1h-1zM10 9h1v1h-1zM15 9h1v1h-1zM2 10h1v1h-1zM5 10h1v1h-1zM9 10h1v1h-1zM14 10h1v1h-1zM2 11h1v1h-1zM6 11h3v1h-3zM14 11h1v1h-1zM3 12h1v1h-1zM13 12h1v1h-1z"/><path fill="#000" stroke="#000" stroke-width="0.3"  transform="translate(28.00 46.25) scale(0.875)" d="M3 2h1v1h-1zM14 2h1v1h-1zM19 2h1v1h-1zM3 3h1v1h-1zM6 3h4v1h-4zM14 3h1v1h-1zM19 3h1v1h-1zM1 4h5v1h-5zM9 4h1v1h-1zM12 4h5v1h-5zM18 4h1v1h-1zM21 4h1v1h-1zM3 5h1v1h-1zM9 5h1v1h-1zM14 5h1v1h-1zM16 5h1v1h-1zM18 5h1v1h-1zM22 5h1v1h-1zM0 6h10v1h-10zM14 6h1v1h-1zM16 6h7v1h-7zM3 7h1v1h-1zM6 7h1v1h-1zM13 7h1v1h-1zM16 7h1v1h-1zM1 8h1v1h-1zM3 8h1v1h-1zM6 8h1v1h-1zM10 8h1v1h-1zM13 8h1v1h-1zM15 8h1v1h-1zM18 8h5v1h-5zM1 9h1v1h-1zM3 9h4v1h-4zM10 9h1v1h-1zM14 9h2v1h-2zM18 9h1v1h-1zM22 9h1v1h-1zM1 10h1v1h-1zM3 10h1v1h-1zM6 10h5v1h-5zM14 10h1v1h-1zM16 10h1v1h-1zM18 10h1v1h-1zM22 10h1v1h-1zM0 11h1v1h-1zM2 11h2v1h-2zM13 11h1v1h-1zM16 11h1v1h-1zM18 11h5v1h-5zM0 12h1v1h-1zM4 12h7v1h-7zM12 12h1v1h-1zM18 12h1v1h-1zM22 12h1v1h-1z"/><path fill="#000" stroke="#000" stroke-width="0.3" stroke-opacity="0" transform="translate(2.00 112.12) scale(0.940)" d="M1 2h2v1h-2zM5 2h4v1h-4zM14 2h10v1h-10zM25 2h2v1h-2zM29 2h4v1h-4zM41 2h7v1h-7zM2 3h2v1h-2zM5 3h4v1h-4zM14 3h2v1h-2zM18 3h2v1h-2zM21 3h2v1h-2zM26 3h2v1h-2zM29 3h4v1h-4zM36 3h6v1h-6zM43 3h2v1h-2zM2 4h2v1h-2zM5 4h6v1h-6zM12 4h6v1h-6zM19 4h3v1h-3zM26 4h2v1h-2zM29 4h6v1h-6zM38 4h2v1h-2zM41 4h7v1h-7zM4 5h2v1h-2zM7 5h2v1h-2zM14 5h2v1h-2zM18 5h2v1h-2zM21 5h2v1h-2zM28 5h2v1h-2zM31 5h2v1h-2zM38 5h2v1h-2zM41 5h2v1h-2zM46 5h2v1h-2zM0 6h12v1h-12zM14 6h5v1h-5zM22 6h14v1h-14zM38 6h2v1h-2zM41 6h4v1h-4zM46 6h2v1h-2zM2 7h2v1h-2zM6 7h4v1h-4zM14 7h3v1h-3zM19 7h2v1h-2zM26 7h2v1h-2zM30 7h4v1h-4zM38 7h2v1h-2zM41 7h4v1h-4zM46 7h2v1h-2zM2 8h2v1h-2zM6 8h6v1h-6zM13 8h3v1h-3zM17 8h6v1h-6zM26 8h2v1h-2zM30 8h6v1h-6zM38 8h2v1h-2zM41 8h4v1h-4zM46 8h2v1h-2zM2 9h2v1h-2zM5 9h2v1h-2zM8 9h8v1h-8zM19 9h2v1h-2zM26 9h2v1h-2zM29 9h2v1h-2zM32 9h4v1h-4zM38 9h7v1h-7zM46 9h2v1h-2zM2 10h4v1h-4zM9 10h3v1h-3zM14 10h10v1h-10zM26 10h4v1h-4zM33 10h6v1h-6zM43 10h3v1h-3zM1 11h4v1h-4zM14 11h2v1h-2zM19 11h2v1h-2zM25 11h4v1h-4zM42 11h2v1h-2zM45 11h2v1h-2zM0 12h2v1h-2zM4 12h12v1h-12zM19 12h2v1h-2zM24 12h2v1h-2zM28 12h8v1h-8zM40 12h3v1h-3zM46 12h2v1h-2z"/><text x="19" y="14.4" font-family="Liberation Mono" font-size="11.67" fill="#e4ebf8" stroke="#e4ebf8" stroke-width="0.7">NX 4 - Modeling - [11.17mbv.prt]</text><g transform="translate(2 2.5)"><defs><radialGradient id="gNx" cx="0.45" cy="0.55" r="0.6"><stop offset="0" stop-color="#c8f4f0"/><stop offset="0.6" stop-color="#50b890"/><stop offset="1" stop-color="#1a7a50"/></radialGradient></defs><circle cx="7.5" cy="7" r="6.3" fill="url(#gNx)"/><path d="M1.5 4q0 6 4 8.5q-3 -4 -1.5 -8z" fill="#2a68d0"/><path d="M1.5 4q-0.5 5 2.5 8q1 -4 2 -6z" fill="#3a78e0"/><path d="M1 0.8l7.5 0.3l-2 5.2z" fill="#c84858"/><path d="M11 1.5q4 2 2.5 6" stroke="#d8d070" stroke-width="1.4" fill="none"/><path d="M0.5 11.5q2 2 5 1.5" stroke="#e0d090" stroke-width="1.4" fill="none"/></g><rect x="4" y="28" width="1.5" height="1.5" fill="#a8a69c"/><rect x="4" y="31" width="1.5" height="1.5" fill="#a8a69c"/><rect x="4" y="34" width="1.5" height="1.5" fill="#a8a69c"/><rect x="4" y="37" width="1.5" height="1.5" fill="#a8a69c"/><g transform="translate(7 25.5)"><path d="M1 4l6 -4l5 3v7l-6 3l-5 -2z" fill="#2a5ad0"/><path d="M2 4l5 -3l4 2l-5 3z" fill="#80b0ff"/><path d="M6 6l6 -3v7l-6 3z" fill="#1840a8"/><path d="M8 9l6 3l-3 0z" fill="#102040"/><path d="M2 5v6" stroke="#a0c8ff" stroke-width="1"/></g><defs><radialGradient id="gRec" cx="0.72" cy="0.25" r="0.75"><stop offset="0" stop-color="#f4faff"/><stop offset="0.35" stop-color="#b8dcfc"/><stop offset="0.7" stop-color="#86c0f4"/><stop offset="1" stop-color="#5a98d8"/></radialGradient></defs><ellipse cx="477.3" cy="346.9" rx="154.1" ry="120.8" transform="rotate(-17.1 477.3 346.9)" fill="#8ac6fb" stroke="#1c2633" stroke-width="1.45"/><ellipse cx="478" cy="346.1" rx="65.3" ry="50.8" transform="rotate(-13.8 478 346.1)" fill="none" stroke="#1c2633" stroke-width="2"/><ellipse cx="477.7" cy="346.7" rx="40" ry="29.9" transform="rotate(-18.6 477.7 346.7)" fill="url(#gRec)" stroke="#1c2633" stroke-width="2.2"/><ellipse cx="478.7" cy="347.3" rx="30.2" ry="22.9" transform="rotate(-9 478.7 347.3)" fill="#8ac6fb" stroke="#1c2633" stroke-width="1.3"/><ellipse cx="477.9" cy="348.4" rx="17.9" ry="15" transform="rotate(-15.1 477.9 348.4)" fill="none" stroke="#1c2633" stroke-width="1.1"/><circle cx="462.1" cy="330.8" r="2.7" fill="#1c2633"/><circle cx="502.6" cy="336.1" r="2.7" fill="#1c2633"/><circle cx="470.5" cy="368.1" r="2.7" fill="#1c2633"/><ellipse cx="493.7" cy="298.3" rx="1.8" ry="1.3" fill="none" stroke="#1c2633" stroke-width="0.9"/><ellipse cx="419.5" cy="364" rx="1.8" ry="1.3" fill="none" stroke="#1c2633" stroke-width="0.9"/><ellipse cx="447.2" cy="376.6" rx="1.8" ry="1.3" fill="none" stroke="#1c2633" stroke-width="0.9"/><ellipse cx="482.6" cy="381.4" rx="1.8" ry="1.3" fill="none" stroke="#1c2633" stroke-width="0.9"/><ellipse cx="517" cy="376.1" rx="1.8" ry="1.3" fill="none" stroke="#1c2633" stroke-width="0.9"/><path d="M430.3 316.3L439.9 311.5" stroke="#1c2633" stroke-width="3.2" stroke-linecap="round"/><path d="M536.3 324.8L537 332" stroke="#1c2633" stroke-width="3.2" stroke-linecap="round"/><path d="M453.2 396.2L464 396.6" stroke="#1c2633" stroke-width="3.4" stroke-linecap="round"/><path d="M499.4 283.5L493.2 265" stroke="#101a80" stroke-width="1.5" fill="none"/><path d="M499.4 283.5L508.4 259" stroke="#30d050" stroke-width="1.5" fill="none"/><path d="M499.4 283.5L530 287.8" stroke="#a82850" stroke-width="1.6" fill="none"/><text x="491.5" y="258.5" font-family="Liberation Sans" font-size="7.5" fill="#b88a70">ZC</text><text x="512.5" y="248" font-family="Liberation Sans" font-size="7.5" fill="#b88a70">YC</text><text x="543.5" y="290" font-family="Liberation Sans" font-size="7.5" fill="#b88a70">XC</text><rect x="115" y="126" width="224" height="301" fill="#0a2db4"/><rect x="115" y="126" width="1" height="301" fill="#08289a"/><rect x="338" y="126" width="1" height="301" fill="#08289a"/><rect x="115" y="424" width="224" height="3" fill="#0a2494"/><path d="M115 142v-19q0 -7 7 -7h210q7 0 7 7v19z" fill="url(#gDlgTitle)"/><rect x="118" y="142" width="218" height="282" fill="#b8ccf4"/><rect x="119" y="142" width="216" height="281" fill="#e4ecfa"/><rect x="120" y="142" width="214" height="281" fill="#ece9d8"/><defs><linearGradient id="gClose" x1="0" y1="0" x2="0" y2="1"><stop offset="0" stop-color="#e8805c"/><stop offset="1" stop-color="#c2452a"/></linearGradient></defs><rect x="315.5" y="121.5" width="18" height="18" rx="2.5" fill="url(#gClose)" stroke="#f4f4f4" stroke-width="1.2"/><path d="M320.5 126.5l8 8M328.5 126.5l-8 8" stroke="#ffffff" stroke-width="1.7"/><g transform="translate(120 122.5)"><circle cx="7.5" cy="7" r="6" fill="#2a9ab8"/><path d="M1.5 4q0 6 4 8.5q-3 -4 -1.5 -8z" fill="#1a58c8"/><path d="M2 4q-0.5 5 2.5 8q1 -4 2 -6z" fill="#2a70e0"/><path d="M3 9q3 4 8 2q3 -2 3 -6q-1 5 -6 5q-3 0 -5 -1z" fill="#50d8e0"/><path d="M1 0.8l7.5 0.3l-2 5.2z" fill="#d03040"/><path d="M11 1.5q4 2 2.5 6" stroke="#d0e070" stroke-width="1.3" fill="none"/></g><path fill="#ffffff" stroke="#ffffff" stroke-width="0.3" stroke-opacity="0" transform="translate(138.00 122.92) scale(1.040)" d="M5 2h2v1h-2zM17 2h2v1h-2zM26 2h8v1h-8zM50 2h2v1h-2zM55 2h2v1h-2zM62 2h8v1h-8zM0 3h24v1h-24zM26 3h2v1h-2zM32 3h2v1h-2zM37 3h10v1h-10zM50 3h2v1h-2zM55 3h2v1h-2zM62 3h2v1h-2zM65 3h2v1h-2zM68 3h2v1h-2zM15 4h2v1h-2zM19 4h2v1h-2zM26 4h8v1h-8zM49 4h2v1h-2zM52 4h8v1h-8zM62 4h8v1h-8zM3 5h6v1h-6zM15 5h6v1h-6zM26 5h2v1h-2zM32 5h2v1h-2zM49 5h4v1h-4zM55 5h2v1h-2zM62 5h2v1h-2zM65 5h2v1h-2zM68 5h2v1h-2zM3 6h2v1h-2zM7 6h2v1h-2zM26 6h8v1h-8zM36 6h16v1h-16zM53 6h6v1h-6zM62 6h8v1h-8zM1 7h10v1h-10zM12 7h12v1h-12zM28 7h4v1h-4zM41 7h2v1h-2zM50 7h2v1h-2zM65 7h2v1h-2zM1 8h2v1h-2zM9 8h2v1h-2zM12 8h2v1h-2zM22 8h2v1h-2zM25 8h2v1h-2zM28 8h4v1h-4zM33 8h2v1h-2zM38 8h2v1h-2zM41 8h2v1h-2zM44 8h2v1h-2zM49 8h2v1h-2zM53 8h6v1h-6zM60 8h12v1h-12zM1 9h10v1h-10zM15 9h6v1h-6zM26 9h6v1h-6zM33 9h2v1h-2zM38 9h2v1h-2zM41 9h2v1h-2zM45 9h2v1h-2zM48 9h7v1h-7zM57 9h2v1h-2zM64 9h4v1h-4zM1 10h4v1h-4zM7 10h4v1h-4zM15 10h2v1h-2zM19 10h2v1h-2zM26 10h8v1h-8zM37 10h2v1h-2zM41 10h2v1h-2zM46 10h2v1h-2zM52 10h3v1h-3zM57 10h2v1h-2zM63 10h6v1h-6zM1 11h10v1h-10zM14 11h2v1h-2zM19 11h2v1h-2zM22 11h2v1h-2zM28 11h4v1h-4zM36 11h2v1h-2zM41 11h2v1h-2zM46 11h2v1h-2zM50 11h9v1h-9zM62 11h2v1h-2zM65 11h2v1h-2zM68 11h2v1h-2zM1 12h2v1h-2zM8 12h3v1h-3zM12 12h3v1h-3zM20 12h16v1h-16zM40 12h3v1h-3zM48 12h3v1h-3zM53 12h2v1h-2zM57 12h2v1h-2zM60 12h3v1h-3zM65 12h2v1h-2zM69 12h3v1h-3z"/><path fill="#000" stroke="#000" stroke-width="0.3"  transform="translate(122.00 146.25) scale(0.875)" d="M8 2h1v1h-1zM15 2h5v1h-5zM0 3h4v1h-4zM8 3h1v1h-1zM14 3h1v1h-1zM18 3h1v1h-1zM3 4h8v1h-8zM13 4h9v1h-9zM0 5h1v1h-1zM3 5h1v1h-1zM8 5h1v1h-1zM12 5h1v1h-1zM14 5h1v1h-1zM17 5h1v1h-1zM21 5h1v1h-1zM1 6h1v1h-1zM3 6h1v1h-1zM8 6h1v1h-1zM14 6h8v1h-8zM2 7h1v1h-1zM5 7h1v1h-1zM8 7h1v1h-1zM15 7h1v1h-1zM17 7h1v1h-1zM21 7h1v1h-1zM2 8h1v1h-1zM6 8h1v1h-1zM8 8h1v1h-1zM13 8h2v1h-2zM16 8h3v1h-3zM20 8h1v1h-1zM1 9h1v1h-1zM3 9h1v1h-1zM8 9h1v1h-1zM15 9h1v1h-1zM18 9h2v1h-2zM1 10h1v1h-1zM3 10h1v1h-1zM8 10h1v1h-1zM13 10h2v1h-2zM17 10h2v1h-2zM20 10h1v1h-1zM0 11h1v1h-1zM6 11h1v1h-1zM8 11h1v1h-1zM15 11h2v1h-2zM18 11h1v1h-1zM21 11h2v1h-2zM7 12h1v1h-1zM12 12h3v1h-3zM17 12h2v1h-2z"/><path fill="#000" stroke="#000" stroke-width="0.3"  transform="translate(122.00 197.25) scale(0.875)" d="M2 2h1v1h-1zM6 2h1v1h-1zM2 3h1v1h-1zM6 3h1v1h-1zM1 4h1v1h-1zM3 4h7v1h-7zM1 5h1v1h-1zM6 5h1v1h-1zM0 6h2v1h-2zM5 6h3v1h-3zM1 7h1v1h-1zM4 7h1v1h-1zM6 7h1v1h-1zM8 7h1v1h-1zM1 8h1v1h-1zM3 8h1v1h-1zM6 8h1v1h-1zM9 8h1v1h-1zM1 9h2v1h-2zM6 9h1v1h-1zM10 9h1v1h-1zM1 10h1v1h-1zM4 10h5v1h-5zM1 11h1v1h-1zM6 11h1v1h-1zM1 12h1v1h-1zM6 12h1v1h-1z"/><path fill="#000" stroke="#000" stroke-width="0.3"  transform="translate(122.00 279.25) scale(0.875)" d="M1 2h10v1h-10zM5 3h1v1h-1zM4 4h1v1h-1zM1 5h10v1h-10zM1 6h1v1h-1zM4 6h1v1h-1zM7 6h1v1h-1zM10 6h1v1h-1zM1 7h1v1h-1zM4 7h4v1h-4zM10 7h1v1h-1zM1 8h1v1h-1zM4 8h1v1h-1zM7 8h1v1h-1zM10 8h1v1h-1zM1 9h1v1h-1zM4 9h4v1h-4zM10 9h1v1h-1zM1 10h1v1h-1zM4 10h1v1h-1zM7 10h1v1h-1zM10 10h1v1h-1zM1 11h10v1h-10zM1 12h1v1h-1zM10 12h1v1h-1z"/><path fill="#000" stroke="#000" stroke-width="0.3"  transform="translate(122.00 344.25) scale(0.875)" d="M1 2h1v1h-1zM7 2h1v1h-1zM14 2h1v1h-1zM17 2h5v1h-5zM2 3h1v1h-1zM7 3h1v1h-1zM14 3h1v1h-1zM17 3h1v1h-1zM21 3h1v1h-1zM2 4h1v1h-1zM4 4h7v1h-7zM13 4h1v1h-1zM16 4h5v1h-5zM7 5h1v1h-1zM10 5h1v1h-1zM13 5h1v1h-1zM15 5h1v1h-1zM20 5h1v1h-1zM0 6h3v1h-3zM7 6h1v1h-1zM10 6h1v1h-1zM12 6h3v1h-3zM16 6h7v1h-7zM2 7h1v1h-1zM7 7h1v1h-1zM10 7h1v1h-1zM14 7h1v1h-1zM17 7h1v1h-1zM19 7h1v1h-1zM22 7h1v1h-1zM2 8h1v1h-1zM6 8h1v1h-1zM10 8h1v1h-1zM13 8h1v1h-1zM16 8h1v1h-1zM18 8h2v1h-2zM21 8h1v1h-1zM2 9h1v1h-1zM5 9h1v1h-1zM10 9h1v1h-1zM12 9h4v1h-4zM17 9h1v1h-1zM19 9h2v1h-2zM2 10h1v1h-1zM4 10h1v1h-1zM8 10h2v1h-2zM16 10h1v1h-1zM18 10h1v1h-1zM20 10h2v1h-2zM1 11h1v1h-1zM3 11h1v1h-1zM14 11h2v1h-2zM17 11h1v1h-1zM20 11h1v1h-1zM22 11h1v1h-1zM0 12h1v1h-1zM4 12h7v1h-7zM12 12h2v1h-2zM18 12h2v1h-2z"/><rect x="122.5" y="162.5" width="10.5" height="10.5" fill="#fbfbf8" stroke="#cbc8ba" stroke-width="1"/><path fill="#a29e90" stroke="#a29e90" stroke-width="0.3" stroke-opacity="0" transform="translate(138.00 160.75) scale(0.875)" d="M2 2h1v1h-1zM4 2h1v1h-1zM6 2h1v1h-1zM8 2h1v1h-1zM17 2h1v1h-1zM27 2h1v1h-1zM31 2h1v1h-1zM1 3h2v1h-2zM4 3h1v1h-1zM6 3h1v1h-1zM8 3h1v1h-1zM17 3h1v1h-1zM26 3h1v1h-1zM31 3h1v1h-1zM0 4h1v1h-1zM2 4h5v1h-5zM8 4h1v1h-1zM17 4h1v1h-1zM25 4h4v1h-4zM30 4h5v1h-5zM7 5h4v1h-4zM14 5h1v1h-1zM17 5h1v1h-1zM20 5h1v1h-1zM25 5h1v1h-1zM28 5h2v1h-2zM34 5h1v1h-1zM1 6h1v1h-1zM3 6h3v1h-3zM7 6h1v1h-1zM9 6h1v1h-1zM14 6h1v1h-1zM17 6h1v1h-1zM21 6h1v1h-1zM25 6h1v1h-1zM28 6h1v1h-1zM34 6h1v1h-1zM0 7h2v1h-2zM6 7h2v1h-2zM9 7h1v1h-1zM13 7h1v1h-1zM17 7h1v1h-1zM21 7h1v1h-1zM25 7h4v1h-4zM30 7h1v1h-1zM34 7h1v1h-1zM1 8h1v1h-1zM3 8h3v1h-3zM7 8h1v1h-1zM9 8h1v1h-1zM13 8h1v1h-1zM17 8h1v1h-1zM22 8h1v1h-1zM25 8h1v1h-1zM28 8h1v1h-1zM31 8h1v1h-1zM34 8h1v1h-1zM1 9h1v1h-1zM3 9h1v1h-1zM5 9h1v1h-1zM8 9h1v1h-1zM12 9h1v1h-1zM17 9h1v1h-1zM22 9h1v1h-1zM25 9h1v1h-1zM28 9h1v1h-1zM31 9h1v1h-1zM34 9h1v1h-1zM1 10h1v1h-1zM3 10h1v1h-1zM5 10h2v1h-2zM8 10h1v1h-1zM17 10h1v1h-1zM25 10h1v1h-1zM28 10h1v1h-1zM34 10h1v1h-1zM1 11h1v1h-1zM3 11h1v1h-1zM5 11h1v1h-1zM7 11h1v1h-1zM9 11h1v1h-1zM15 11h1v1h-1zM17 11h1v1h-1zM25 11h4v1h-4zM34 11h1v1h-1zM1 12h2v1h-2zM6 12h1v1h-1zM10 12h1v1h-1zM16 12h1v1h-1zM25 12h1v1h-1zM28 12h1v1h-1zM32 12h2v1h-2z"/><rect x="122.5" y="178.5" width="10.5" height="10.5" fill="#fbfbf8" stroke="#cbc8ba" stroke-width="1"/><path fill="#a29e90" stroke="#a29e90" stroke-width="0.3" stroke-opacity="0" transform="translate(138.00 176.75) scale(0.875)" d="M5 2h1v1h-1zM20 2h1v1h-1zM29 2h1v1h-1zM39 2h1v1h-1zM43 2h1v1h-1zM5 3h1v1h-1zM12 3h4v1h-4zM20 3h1v1h-1zM24 3h11v1h-11zM38 3h1v1h-1zM43 3h1v1h-1zM1 4h9v1h-9zM15 4h8v1h-8zM27 4h1v1h-1zM32 4h1v1h-1zM37 4h4v1h-4zM42 4h5v1h-5zM5 5h1v1h-1zM12 5h1v1h-1zM15 5h1v1h-1zM20 5h1v1h-1zM28 5h1v1h-1zM31 5h1v1h-1zM37 5h1v1h-1zM40 5h2v1h-2zM46 5h1v1h-1zM0 6h11v1h-11zM13 6h1v1h-1zM15 6h1v1h-1zM20 6h1v1h-1zM29 6h2v1h-2zM37 6h1v1h-1zM40 6h1v1h-1zM46 6h1v1h-1zM5 7h1v1h-1zM14 7h1v1h-1zM17 7h1v1h-1zM20 7h1v1h-1zM27 7h2v1h-2zM31 7h2v1h-2zM37 7h4v1h-4zM42 7h1v1h-1zM46 7h1v1h-1zM4 8h3v1h-3zM14 8h1v1h-1zM18 8h1v1h-1zM20 8h1v1h-1zM24 8h3v1h-3zM33 8h2v1h-2zM37 8h1v1h-1zM40 8h1v1h-1zM43 8h1v1h-1zM46 8h1v1h-1zM3 9h1v1h-1zM5 9h1v1h-1zM7 9h1v1h-1zM13 9h1v1h-1zM15 9h1v1h-1zM20 9h1v1h-1zM28 9h1v1h-1zM31 9h1v1h-1zM37 9h1v1h-1zM40 9h1v1h-1zM43 9h1v1h-1zM46 9h1v1h-1zM2 10h1v1h-1zM5 10h1v1h-1zM8 10h1v1h-1zM13 10h1v1h-1zM15 10h1v1h-1zM20 10h1v1h-1zM28 10h1v1h-1zM31 10h1v1h-1zM37 10h1v1h-1zM40 10h1v1h-1zM46 10h1v1h-1zM0 11h2v1h-2zM5 11h1v1h-1zM9 11h2v1h-2zM12 11h1v1h-1zM18 11h1v1h-1zM20 11h1v1h-1zM27 11h1v1h-1zM31 11h1v1h-1zM37 11h4v1h-4zM46 11h1v1h-1zM5 12h1v1h-1zM19 12h1v1h-1zM25 12h2v1h-2zM31 12h1v1h-1zM37 12h1v1h-1zM40 12h1v1h-1zM44 12h2v1h-2z"/><rect x="122.5" y="213.5" width="10.5" height="10.5" fill="#fbfbf8" stroke="#cbc8ba" stroke-width="1"/><path fill="#a29e90" stroke="#a29e90" stroke-width="0.3" stroke-opacity="0" transform="translate(138.00 211.75) scale(0.875)" d="M0 2h1v1h-1zM3 2h1v1h-1zM5 2h1v1h-1zM7 2h1v1h-1zM14 2h1v1h-1zM17 2h6v1h-6zM26 2h1v1h-1zM31 2h1v1h-1zM38 2h1v1h-1zM42 2h1v1h-1zM1 3h1v1h-1zM3 3h2v1h-2zM7 3h1v1h-1zM14 3h1v1h-1zM17 3h1v1h-1zM22 3h1v1h-1zM26 3h1v1h-1zM31 3h1v1h-1zM38 3h1v1h-1zM42 3h1v1h-1zM0 4h6v1h-6zM7 4h4v1h-4zM12 4h6v1h-6zM22 4h1v1h-1zM25 4h1v1h-1zM28 4h7v1h-7zM36 4h5v1h-5zM42 4h5v1h-5zM2 5h2v1h-2zM6 5h2v1h-2zM9 5h1v1h-1zM14 5h1v1h-1zM17 5h6v1h-6zM25 5h1v1h-1zM27 5h1v1h-1zM31 5h1v1h-1zM38 5h1v1h-1zM41 5h1v1h-1zM46 5h1v1h-1zM1 6h1v1h-1zM3 6h2v1h-2zM7 6h1v1h-1zM9 6h1v1h-1zM14 6h1v1h-1zM16 6h2v1h-2zM20 6h1v1h-1zM24 6h3v1h-3zM29 6h5v1h-5zM38 6h1v1h-1zM42 6h1v1h-1zM46 6h1v1h-1zM0 7h1v1h-1zM3 7h1v1h-1zM5 7h1v1h-1zM7 7h1v1h-1zM9 7h1v1h-1zM14 7h2v1h-2zM17 7h6v1h-6zM26 7h1v1h-1zM37 7h3v1h-3zM42 7h1v1h-1zM46 7h1v1h-1zM0 8h6v1h-6zM7 8h1v1h-1zM9 8h1v1h-1zM13 8h2v1h-2zM17 8h1v1h-1zM20 8h1v1h-1zM25 8h1v1h-1zM29 8h5v1h-5zM37 8h2v1h-2zM40 8h2v1h-2zM44 8h1v1h-1zM46 8h1v1h-1zM2 9h1v1h-1zM4 9h1v1h-1zM7 9h1v1h-1zM9 9h1v1h-1zM12 9h1v1h-1zM14 9h1v1h-1zM17 9h6v1h-6zM24 9h4v1h-4zM29 9h1v1h-1zM33 9h1v1h-1zM36 9h1v1h-1zM38 9h1v1h-1zM41 9h4v1h-4zM46 9h1v1h-1zM1 10h2v1h-2zM4 10h1v1h-1zM8 10h1v1h-1zM14 10h1v1h-1zM16 10h3v1h-3zM22 10h1v1h-1zM28 10h2v1h-2zM33 10h1v1h-1zM38 10h1v1h-1zM44 10h1v1h-1zM46 10h1v1h-1zM3 11h1v1h-1zM7 11h1v1h-1zM9 11h1v1h-1zM12 11h1v1h-1zM14 11h1v1h-1zM16 11h1v1h-1zM18 11h1v1h-1zM22 11h1v1h-1zM26 11h2v1h-2zM29 11h5v1h-5zM38 11h1v1h-1zM46 11h1v1h-1zM0 12h3v1h-3zM4 12h3v1h-3zM10 12h1v1h-1zM13 12h1v1h-1zM15 12h1v1h-1zM18 12h5v1h-5zM24 12h2v1h-2zM29 12h1v1h-1zM33 12h1v1h-1zM38 12h1v1h-1zM44 12h2v1h-2z"/><rect x="122.5" y="229.5" width="10.5" height="10.5" fill="#fbfbf8" stroke="#cbc8ba" stroke-width="1"/><path fill="#a29e90" stroke="#a29e90" stroke-width="0.3" stroke-opacity="0" transform="translate(138.00 227.75) scale(0.875)" d="M12 2h6v1h-6zM19 2h1v1h-1zM26 2h1v1h-1zM31 2h1v1h-1zM14 3h1v1h-1zM19 3h1v1h-1zM26 3h1v1h-1zM29 3h1v1h-1zM31 3h1v1h-1zM14 4h1v1h-1zM16 4h1v1h-1zM19 4h4v1h-4zM24 4h1v1h-1zM26 4h2v1h-2zM29 4h1v1h-1zM31 4h1v1h-1zM13 5h1v1h-1zM16 5h1v1h-1zM18 5h1v1h-1zM21 5h1v1h-1zM24 5h1v1h-1zM26 5h1v1h-1zM28 5h7v1h-7zM9 6h1v1h-1zM13 6h3v1h-3zM17 6h1v1h-1zM19 6h1v1h-1zM21 6h1v1h-1zM24 6h1v1h-1zM26 6h1v1h-1zM28 6h1v1h-1zM31 6h1v1h-1zM0 7h11v1h-11zM15 7h1v1h-1zM19 7h1v1h-1zM21 7h1v1h-1zM24 7h1v1h-1zM26 7h2v1h-2zM31 7h1v1h-1zM13 8h5v1h-5zM19 8h1v1h-1zM21 8h1v1h-1zM26 8h1v1h-1zM29 8h5v1h-5zM15 9h1v1h-1zM19 9h1v1h-1zM21 9h1v1h-1zM26 9h1v1h-1zM31 9h1v1h-1zM15 10h1v1h-1zM20 10h1v1h-1zM26 10h1v1h-1zM31 10h1v1h-1zM15 11h3v1h-3zM19 11h1v1h-1zM21 11h1v1h-1zM26 11h1v1h-1zM31 11h1v1h-1zM12 12h3v1h-3zM18 12h1v1h-1zM22 12h1v1h-1zM26 12h1v1h-1zM28 12h7v1h-7z"/><rect x="122.5" y="244.5" width="10.5" height="10.5" fill="#fbfbf8" stroke="#cbc8ba" stroke-width="1"/><path fill="#a29e90" stroke="#a29e90" stroke-width="0.3" stroke-opacity="0" transform="translate(138.00 242.75) scale(0.875)" d="M1 2h10v1h-10zM17 2h10v1h-10zM31 2h1v1h-1zM34 2h5v1h-5zM45 2h1v1h-1zM5 3h1v1h-1zM21 3h1v1h-1zM31 3h1v1h-1zM34 3h1v1h-1zM38 3h1v1h-1zM40 3h11v1h-11zM4 4h1v1h-1zM20 4h1v1h-1zM29 4h6v1h-6zM38 4h1v1h-1zM1 5h10v1h-10zM17 5h10v1h-10zM31 5h1v1h-1zM34 5h5v1h-5zM43 5h1v1h-1zM47 5h1v1h-1zM1 6h1v1h-1zM4 6h1v1h-1zM7 6h1v1h-1zM10 6h1v1h-1zM17 6h1v1h-1zM20 6h1v1h-1zM23 6h1v1h-1zM26 6h1v1h-1zM31 6h1v1h-1zM34 6h1v1h-1zM38 6h1v1h-1zM42 6h1v1h-1zM48 6h1v1h-1zM1 7h1v1h-1zM4 7h4v1h-4zM10 7h1v1h-1zM12 7h6v1h-6zM20 7h4v1h-4zM26 7h1v1h-1zM30 7h3v1h-3zM34 7h1v1h-1zM38 7h1v1h-1zM41 7h1v1h-1zM43 7h1v1h-1zM47 7h1v1h-1zM49 7h1v1h-1zM1 8h1v1h-1zM4 8h1v1h-1zM7 8h1v1h-1zM10 8h1v1h-1zM17 8h1v1h-1zM20 8h1v1h-1zM23 8h1v1h-1zM26 8h1v1h-1zM29 8h1v1h-1zM31 8h1v1h-1zM33 8h6v1h-6zM43 8h1v1h-1zM47 8h1v1h-1zM1 9h1v1h-1zM4 9h4v1h-4zM10 9h1v1h-1zM17 9h1v1h-1zM20 9h4v1h-4zM26 9h1v1h-1zM28 9h1v1h-1zM31 9h1v1h-1zM34 9h1v1h-1zM38 9h1v1h-1zM44 9h1v1h-1zM46 9h1v1h-1zM1 10h1v1h-1zM4 10h1v1h-1zM7 10h1v1h-1zM10 10h1v1h-1zM17 10h1v1h-1zM20 10h1v1h-1zM23 10h1v1h-1zM26 10h1v1h-1zM31 10h1v1h-1zM34 10h1v1h-1zM38 10h1v1h-1zM45 10h1v1h-1zM1 11h10v1h-10zM17 11h10v1h-10zM31 11h1v1h-1zM34 11h5v1h-5zM43 11h2v1h-2zM46 11h2v1h-2zM1 12h1v1h-1zM10 12h1v1h-1zM17 12h1v1h-1zM26 12h1v1h-1zM31 12h1v1h-1zM34 12h1v1h-1zM38 12h1v1h-1zM41 12h2v1h-2zM48 12h3v1h-3z"/><rect x="122.5" y="260.5" width="10.5" height="10.5" fill="#fbfbf8" stroke="#cbc8ba" stroke-width="1"/><rect x="122.5" y="260.5" width="10.5" height="10.5" fill="#ffffff" stroke="#3a5f84" stroke-width="1"/><path d="M124.5 265.5l2.6 2.4l4.3 -4.8" stroke="#22a02a" stroke-width="1.9" fill="none"/><path fill="#000000" stroke="#000000" stroke-width="0.3"  transform="translate(138.00 258.75) scale(0.875)" d="M2 2h1v1h-1zM7 2h1v1h-1zM14 2h1v1h-1zM18 2h1v1h-1zM25 2h1v1h-1zM31 2h1v1h-1zM37 2h9v1h-9zM2 3h1v1h-1zM7 3h1v1h-1zM14 3h1v1h-1zM18 3h1v1h-1zM26 3h1v1h-1zM31 3h1v1h-1zM37 3h1v1h-1zM41 3h1v1h-1zM45 3h1v1h-1zM2 4h1v1h-1zM7 4h1v1h-1zM13 4h1v1h-1zM15 4h7v1h-7zM26 4h1v1h-1zM28 4h7v1h-7zM37 4h9v1h-9zM2 5h9v1h-9zM13 5h1v1h-1zM18 5h1v1h-1zM31 5h1v1h-1zM34 5h1v1h-1zM37 5h1v1h-1zM41 5h1v1h-1zM45 5h1v1h-1zM2 6h1v1h-1zM12 6h2v1h-2zM17 6h3v1h-3zM24 6h3v1h-3zM31 6h1v1h-1zM34 6h1v1h-1zM37 6h9v1h-9zM2 7h1v1h-1zM13 7h1v1h-1zM16 7h1v1h-1zM18 7h1v1h-1zM20 7h1v1h-1zM26 7h1v1h-1zM31 7h1v1h-1zM34 7h1v1h-1zM40 7h1v1h-1zM42 7h1v1h-1zM2 8h7v1h-7zM13 8h1v1h-1zM15 8h1v1h-1zM18 8h1v1h-1zM21 8h1v1h-1zM26 8h1v1h-1zM30 8h1v1h-1zM34 8h1v1h-1zM38 8h2v1h-2zM43 8h2v1h-2zM2 9h1v1h-1zM8 9h1v1h-1zM13 9h2v1h-2zM18 9h1v1h-1zM22 9h1v1h-1zM26 9h1v1h-1zM29 9h1v1h-1zM34 9h1v1h-1zM36 9h2v1h-2zM39 9h1v1h-1zM43 9h1v1h-1zM45 9h2v1h-2zM2 10h1v1h-1zM8 10h1v1h-1zM13 10h1v1h-1zM16 10h5v1h-5zM26 10h1v1h-1zM28 10h1v1h-1zM32 10h2v1h-2zM39 10h1v1h-1zM43 10h1v1h-1zM1 11h1v1h-1zM8 11h1v1h-1zM13 11h1v1h-1zM18 11h1v1h-1zM25 11h1v1h-1zM27 11h1v1h-1zM38 11h1v1h-1zM43 11h1v1h-1zM0 12h1v1h-1zM8 12h1v1h-1zM13 12h1v1h-1zM18 12h1v1h-1zM24 12h1v1h-1zM28 12h7v1h-7zM37 12h1v1h-1zM43 12h1v1h-1z"/><rect x="122.5" y="295.5" width="10.5" height="10.5" fill="#fbfbf8" stroke="#cbc8ba" stroke-width="1"/><path fill="#a29e90" stroke="#a29e90" stroke-width="0.3" stroke-opacity="0" transform="translate(138.00 293.75) scale(0.875)" d="M5 2h1v1h-1zM12 2h1v1h-1zM16 2h1v1h-1zM18 2h5v1h-5zM26 2h1v1h-1zM31 2h1v1h-1zM1 3h1v1h-1zM5 3h1v1h-1zM9 3h1v1h-1zM12 3h1v1h-1zM14 3h1v1h-1zM16 3h1v1h-1zM20 3h1v1h-1zM26 3h1v1h-1zM29 3h1v1h-1zM31 3h1v1h-1zM2 4h1v1h-1zM5 4h1v1h-1zM8 4h1v1h-1zM12 4h1v1h-1zM14 4h1v1h-1zM16 4h1v1h-1zM18 4h5v1h-5zM24 4h1v1h-1zM26 4h2v1h-2zM29 4h1v1h-1zM31 4h1v1h-1zM5 5h1v1h-1zM12 5h1v1h-1zM14 5h1v1h-1zM16 5h1v1h-1zM18 5h1v1h-1zM22 5h1v1h-1zM24 5h1v1h-1zM26 5h1v1h-1zM28 5h7v1h-7zM0 6h11v1h-11zM12 6h1v1h-1zM14 6h1v1h-1zM16 6h1v1h-1zM18 6h1v1h-1zM20 6h1v1h-1zM22 6h1v1h-1zM24 6h1v1h-1zM26 6h1v1h-1zM28 6h1v1h-1zM31 6h1v1h-1zM3 7h1v1h-1zM6 7h1v1h-1zM12 7h1v1h-1zM14 7h1v1h-1zM16 7h1v1h-1zM18 7h1v1h-1zM20 7h1v1h-1zM22 7h1v1h-1zM24 7h1v1h-1zM26 7h2v1h-2zM31 7h1v1h-1zM3 8h1v1h-1zM6 8h1v1h-1zM12 8h1v1h-1zM14 8h1v1h-1zM16 8h1v1h-1zM18 8h1v1h-1zM20 8h1v1h-1zM22 8h1v1h-1zM26 8h1v1h-1zM29 8h5v1h-5zM3 9h1v1h-1zM6 9h1v1h-1zM10 9h1v1h-1zM12 9h1v1h-1zM14 9h1v1h-1zM16 9h1v1h-1zM18 9h1v1h-1zM20 9h1v1h-1zM22 9h1v1h-1zM26 9h1v1h-1zM31 9h1v1h-1zM3 10h1v1h-1zM6 10h1v1h-1zM10 10h1v1h-1zM12 10h1v1h-1zM14 10h1v1h-1zM16 10h1v1h-1zM20 10h1v1h-1zM26 10h1v1h-1zM31 10h1v1h-1zM2 11h1v1h-1zM6 11h1v1h-1zM10 11h1v1h-1zM12 11h1v1h-1zM16 11h1v1h-1zM19 11h1v1h-1zM21 11h1v1h-1zM26 11h1v1h-1zM31 11h1v1h-1zM0 12h2v1h-2zM7 12h4v1h-4zM12 12h1v1h-1zM16 12h1v1h-1zM18 12h1v1h-1zM22 12h1v1h-1zM26 12h1v1h-1zM28 12h7v1h-7z"/><rect x="122.5" y="311.5" width="10.5" height="10.5" fill="#fbfbf8" stroke="#cbc8ba" stroke-width="1"/><path fill="#a29e90" stroke="#a29e90" stroke-width="0.3" stroke-opacity="0" transform="translate(138.00 309.75) scale(0.875)" d="M4 2h1v1h-1zM15 2h1v1h-1zM18 2h5v1h-5zM29 2h1v1h-1zM2 3h7v1h-7zM15 3h1v1h-1zM18 3h1v1h-1zM22 3h1v1h-1zM24 3h11v1h-11zM2 4h1v1h-1zM8 4h1v1h-1zM13 4h6v1h-6zM22 4h1v1h-1zM2 5h1v1h-1zM8 5h1v1h-1zM15 5h1v1h-1zM18 5h5v1h-5zM27 5h1v1h-1zM31 5h1v1h-1zM2 6h7v1h-7zM15 6h1v1h-1zM18 6h1v1h-1zM22 6h1v1h-1zM26 6h1v1h-1zM32 6h1v1h-1zM2 7h1v1h-1zM8 7h1v1h-1zM14 7h3v1h-3zM18 7h1v1h-1zM22 7h1v1h-1zM25 7h1v1h-1zM27 7h1v1h-1zM31 7h1v1h-1zM33 7h1v1h-1zM2 8h7v1h-7zM13 8h1v1h-1zM15 8h1v1h-1zM17 8h6v1h-6zM27 8h1v1h-1zM31 8h1v1h-1zM2 9h1v1h-1zM8 9h1v1h-1zM12 9h1v1h-1zM15 9h1v1h-1zM18 9h1v1h-1zM22 9h1v1h-1zM28 9h1v1h-1zM30 9h1v1h-1zM2 10h1v1h-1zM8 10h1v1h-1zM15 10h1v1h-1zM18 10h1v1h-1zM22 10h1v1h-1zM29 10h1v1h-1zM2 11h7v1h-7zM15 11h1v1h-1zM18 11h5v1h-5zM27 11h2v1h-2zM30 11h2v1h-2zM2 12h1v1h-1zM8 12h1v1h-1zM15 12h1v1h-1zM18 12h1v1h-1zM22 12h1v1h-1zM25 12h2v1h-2zM32 12h3v1h-3z"/><rect x="122.5" y="326.5" width="10.5" height="10.5" fill="#fbfbf8" stroke="#cbc8ba" stroke-width="1"/><path fill="#a29e90" stroke="#a29e90" stroke-width="0.3" stroke-opacity="0" transform="translate(138.00 324.75) scale(0.875)" d="M27 1h1v1h-1zM1 2h1v1h-1zM5 2h1v1h-1zM9 2h1v1h-1zM15 2h1v1h-1zM22 2h1v1h-1zM27 2h1v1h-1zM32 2h1v1h-1zM44 2h1v1h-1zM48 2h4v1h-4zM1 3h1v1h-1zM6 3h1v1h-1zM8 3h1v1h-1zM12 3h7v1h-7zM20 3h1v1h-1zM22 3h1v1h-1zM27 3h1v1h-1zM32 3h1v1h-1zM35 3h6v1h-6zM44 3h1v1h-1zM46 3h1v1h-1zM48 3h1v1h-1zM51 3h1v1h-1zM1 4h3v1h-3zM5 4h5v1h-5zM15 4h1v1h-1zM20 4h1v1h-1zM22 4h1v1h-1zM26 4h1v1h-1zM31 4h1v1h-1zM35 4h1v1h-1zM38 4h1v1h-1zM40 4h1v1h-1zM43 4h1v1h-1zM46 4h2v1h-2zM49 4h2v1h-2zM0 5h1v1h-1zM5 5h1v1h-1zM9 5h1v1h-1zM13 5h6v1h-6zM20 5h1v1h-1zM22 5h1v1h-1zM26 5h1v1h-1zM31 5h1v1h-1zM33 5h1v1h-1zM35 5h1v1h-1zM38 5h1v1h-1zM40 5h1v1h-1zM43 5h1v1h-1zM45 5h1v1h-1zM48 5h1v1h-1zM51 5h1v1h-1zM0 6h4v1h-4zM5 6h1v1h-1zM9 6h1v1h-1zM13 6h1v1h-1zM15 6h1v1h-1zM18 6h1v1h-1zM20 6h1v1h-1zM22 6h1v1h-1zM26 6h1v1h-1zM30 6h3v1h-3zM35 6h1v1h-1zM38 6h1v1h-1zM40 6h1v1h-1zM42 6h3v1h-3zM46 6h7v1h-7zM2 7h1v1h-1zM5 7h5v1h-5zM13 7h1v1h-1zM15 7h1v1h-1zM18 7h1v1h-1zM20 7h1v1h-1zM22 7h1v1h-1zM25 7h1v1h-1zM32 7h1v1h-1zM35 7h6v1h-6zM44 7h1v1h-1zM47 7h1v1h-1zM50 7h1v1h-1zM0 8h4v1h-4zM6 8h1v1h-1zM8 8h1v1h-1zM13 8h1v1h-1zM15 8h1v1h-1zM17 8h2v1h-2zM20 8h1v1h-1zM22 8h1v1h-1zM25 8h1v1h-1zM31 8h1v1h-1zM35 8h1v1h-1zM38 8h1v1h-1zM40 8h1v1h-1zM43 8h1v1h-1zM47 8h6v1h-6zM2 9h1v1h-1zM6 9h1v1h-1zM8 9h1v1h-1zM14 9h3v1h-3zM20 9h1v1h-1zM22 9h1v1h-1zM25 9h1v1h-1zM30 9h4v1h-4zM35 9h1v1h-1zM38 9h1v1h-1zM40 9h1v1h-1zM42 9h4v1h-4zM47 9h1v1h-1zM50 9h1v1h-1zM2 10h1v1h-1zM4 10h1v1h-1zM6 10h1v1h-1zM8 10h1v1h-1zM10 10h1v1h-1zM13 10h1v1h-1zM15 10h1v1h-1zM17 10h1v1h-1zM22 10h1v1h-1zM24 10h1v1h-1zM35 10h1v1h-1zM38 10h1v1h-1zM40 10h1v1h-1zM47 10h6v1h-6zM2 11h2v1h-2zM5 11h1v1h-1zM8 11h1v1h-1zM10 11h1v1h-1zM12 11h1v1h-1zM15 11h1v1h-1zM18 11h1v1h-1zM22 11h1v1h-1zM24 11h1v1h-1zM32 11h2v1h-2zM35 11h6v1h-6zM44 11h4v1h-4zM50 11h1v1h-1zM2 12h1v1h-1zM4 12h1v1h-1zM8 12h3v1h-3zM15 12h1v1h-1zM21 12h2v1h-2zM24 12h1v1h-1zM30 12h2v1h-2zM35 12h1v1h-1zM40 12h1v1h-1zM42 12h2v1h-2zM48 12h5v1h-5z"/><rect x="122.5" y="362.0" width="10.5" height="10.5" fill="#fbfbf8" stroke="#cbc8ba" stroke-width="1"/><path fill="#a29e90" stroke="#a29e90" stroke-width="0.3" stroke-opacity="0" transform="translate(138.00 360.25) scale(0.875)" d="M5 2h1v1h-1zM12 2h1v1h-1zM16 2h1v1h-1zM18 2h5v1h-5zM26 2h1v1h-1zM31 2h1v1h-1zM1 3h1v1h-1zM5 3h1v1h-1zM9 3h1v1h-1zM12 3h1v1h-1zM14 3h1v1h-1zM16 3h1v1h-1zM20 3h1v1h-1zM26 3h1v1h-1zM29 3h1v1h-1zM31 3h1v1h-1zM2 4h1v1h-1zM5 4h1v1h-1zM8 4h1v1h-1zM12 4h1v1h-1zM14 4h1v1h-1zM16 4h1v1h-1zM18 4h5v1h-5zM24 4h1v1h-1zM26 4h2v1h-2zM29 4h1v1h-1zM31 4h1v1h-1zM5 5h1v1h-1zM12 5h1v1h-1zM14 5h1v1h-1zM16 5h1v1h-1zM18 5h1v1h-1zM22 5h1v1h-1zM24 5h1v1h-1zM26 5h1v1h-1zM28 5h7v1h-7zM0 6h11v1h-11zM12 6h1v1h-1zM14 6h1v1h-1zM16 6h1v1h-1zM18 6h1v1h-1zM20 6h1v1h-1zM22 6h1v1h-1zM24 6h1v1h-1zM26 6h1v1h-1zM28 6h1v1h-1zM31 6h1v1h-1zM3 7h1v1h-1zM6 7h1v1h-1zM12 7h1v1h-1zM14 7h1v1h-1zM16 7h1v1h-1zM18 7h1v1h-1zM20 7h1v1h-1zM22 7h1v1h-1zM24 7h1v1h-1zM26 7h2v1h-2zM31 7h1v1h-1zM3 8h1v1h-1zM6 8h1v1h-1zM12 8h1v1h-1zM14 8h1v1h-1zM16 8h1v1h-1zM18 8h1v1h-1zM20 8h1v1h-1zM22 8h1v1h-1zM26 8h1v1h-1zM29 8h5v1h-5zM3 9h1v1h-1zM6 9h1v1h-1zM10 9h1v1h-1zM12 9h1v1h-1zM14 9h1v1h-1zM16 9h1v1h-1zM18 9h1v1h-1zM20 9h1v1h-1zM22 9h1v1h-1zM26 9h1v1h-1zM31 9h1v1h-1zM3 10h1v1h-1zM6 10h1v1h-1zM10 10h1v1h-1zM12 10h1v1h-1zM14 10h1v1h-1zM16 10h1v1h-1zM20 10h1v1h-1zM26 10h1v1h-1zM31 10h1v1h-1zM2 11h1v1h-1zM6 11h1v1h-1zM10 11h1v1h-1zM12 11h1v1h-1zM16 11h1v1h-1zM19 11h1v1h-1zM21 11h1v1h-1zM26 11h1v1h-1zM31 11h1v1h-1zM0 12h2v1h-2zM7 12h4v1h-4zM12 12h1v1h-1zM16 12h1v1h-1zM18 12h1v1h-1zM22 12h1v1h-1zM26 12h1v1h-1zM28 12h7v1h-7z"/><rect x="122.5" y="377.5" width="10.5" height="10.5" fill="#fbfbf8" stroke="#cbc8ba" stroke-width="1"/><path fill="#a29e90" stroke="#a29e90" stroke-width="0.3" stroke-opacity="0" transform="translate(138.00 375.75) scale(0.875)" d="M7 2h1v1h-1zM15 2h1v1h-1zM20 2h1v1h-1zM3 3h1v1h-1zM7 3h1v1h-1zM16 3h1v1h-1zM19 3h1v1h-1zM3 4h1v1h-1zM8 4h1v1h-1zM12 4h11v1h-11zM2 5h1v1h-1zM8 5h1v1h-1zM17 5h1v1h-1zM2 6h1v1h-1zM5 6h1v1h-1zM9 6h1v1h-1zM13 6h9v1h-9zM1 7h1v1h-1zM5 7h1v1h-1zM10 7h1v1h-1zM16 7h1v1h-1zM0 8h1v1h-1zM4 8h1v1h-1zM12 8h11v1h-11zM4 9h1v1h-1zM7 9h1v1h-1zM15 9h1v1h-1zM3 10h1v1h-1zM8 10h1v1h-1zM14 10h1v1h-1zM16 10h5v1h-5zM2 11h8v1h-8zM13 11h1v1h-1zM18 11h1v1h-1zM3 12h1v1h-1zM9 12h1v1h-1zM12 12h1v1h-1zM14 12h9v1h-9z"/><rect x="136.5" y="259.5" width="45" height="12" fill="none" stroke="#000" stroke-opacity="0.85" stroke-width="1" stroke-dasharray="1.5 1"/><rect x="121" y="193" width="209" height="1" fill="#bcb9a9"/><rect x="121" y="194" width="209" height="1" fill="#ffffff"/><rect x="121" y="275" width="209" height="1" fill="#bcb9a9"/><rect x="121" y="276" width="209" height="1" fill="#ffffff"/><rect x="121" y="341" width="209" height="1" fill="#bcb9a9"/><rect x="121" y="342" width="209" height="1" fill="#ffffff"/><rect x="121" y="396" width="209" height="1" fill="#bcb9a9"/><rect x="121" y="397" width="209" height="1" fill="#ffffff"/><rect x="304.5" y="361.5" width="26" height="25" rx="3" fill="url(#gBtn)" stroke="#4a6070" stroke-width="1"/><rect x="309.5" y="365.5" width="17" height="17" fill="#ffffff" stroke="#383838" stroke-width="1"/><circle cx="317.5" cy="369.3" r="1.4" fill="#10109a"/><path d="M315.2 372h3.8v6.6h1.6v1.3h-6.3v-1.3h1.3v-5.3h-0.4z" fill="#10109a"/><rect x="177.5" y="401.5" width="45" height="17" rx="3" fill="url(#gBtn)" stroke="#3c5670" stroke-width="1"/><rect x="178" y="402" width="42" height="14" rx="2" fill="none" stroke="#98b8ea" stroke-width="1.6"/><path fill="#000" stroke="#000" stroke-width="0.3"  transform="translate(189.94 403.25) scale(0.875)" d="M6 2h1v1h-1zM17 2h1v1h-1zM0 3h4v1h-4zM6 3h4v1h-4zM13 3h10v1h-10zM2 4h1v1h-1zM5 4h1v1h-1zM8 4h1v1h-1zM13 4h1v1h-1zM22 4h1v1h-1zM1 5h1v1h-1zM4 5h7v1h-7zM12 5h1v1h-1zM21 5h1v1h-1zM0 6h4v1h-4zM5 6h1v1h-1zM7 6h1v1h-1zM10 6h1v1h-1zM14 6h8v1h-8zM1 7h1v1h-1zM3 7h1v1h-1zM5 7h6v1h-6zM17 7h1v1h-1zM1 8h1v1h-1zM3 8h1v1h-1zM5 8h1v1h-1zM7 8h1v1h-1zM10 8h1v1h-1zM14 8h1v1h-1zM17 8h1v1h-1zM1 9h1v1h-1zM3 9h1v1h-1zM5 9h6v1h-6zM14 9h1v1h-1zM17 9h4v1h-4zM1 10h3v1h-3zM5 10h1v1h-1zM7 10h1v1h-1zM10 10h1v1h-1zM14 10h1v1h-1zM17 10h1v1h-1zM1 11h1v1h-1zM5 11h1v1h-1zM7 11h1v1h-1zM10 11h1v1h-1zM13 11h1v1h-1zM15 11h1v1h-1zM17 11h1v1h-1zM4 12h1v1h-1zM9 12h2v1h-2zM12 12h1v1h-1zM16 12h7v1h-7z"/><rect x="228.5" y="401.5" width="45" height="17" rx="3" fill="url(#gBtn)" stroke="#3c5670" stroke-width="1"/><path fill="#000" stroke="#000" stroke-width="0.3"  transform="translate(240.94 403.25) scale(0.875)" d="M7 2h3v1h-3zM12 2h1v1h-1zM16 2h6v1h-6zM2 3h5v1h-5zM13 3h1v1h-1zM16 3h1v1h-1zM21 3h1v1h-1zM2 4h1v1h-1zM13 4h1v1h-1zM16 4h6v1h-6zM2 5h9v1h-9zM16 5h1v1h-1zM21 5h1v1h-1zM2 6h1v1h-1zM12 6h2v1h-2zM16 6h6v1h-6zM2 7h1v1h-1zM13 7h1v1h-1zM16 7h1v1h-1zM2 8h1v1h-1zM4 8h6v1h-6zM13 8h1v1h-1zM16 8h1v1h-1zM18 8h2v1h-2zM21 8h1v1h-1zM2 9h1v1h-1zM4 9h1v1h-1zM9 9h1v1h-1zM13 9h1v1h-1zM16 9h1v1h-1zM20 9h1v1h-1zM1 10h1v1h-1zM4 10h1v1h-1zM9 10h1v1h-1zM13 10h1v1h-1zM16 10h3v1h-3zM21 10h1v1h-1zM1 11h1v1h-1zM4 11h6v1h-6zM12 11h1v1h-1zM14 11h2v1h-2zM0 12h1v1h-1zM4 12h1v1h-1zM9 12h1v1h-1zM12 12h1v1h-1zM16 12h7v1h-7z"/><rect x="280.5" y="401.5" width="45" height="17" rx="3" fill="url(#gBtn)" stroke="#3c5670" stroke-width="1"/><path fill="#000" stroke="#000" stroke-width="0.3"  transform="translate(292.94 403.25) scale(0.875)" d="M0 2h6v1h-6zM13 2h1v1h-1zM16 2h1v1h-1zM19 2h1v1h-1zM22 2h1v1h-1zM1 3h1v1h-1zM4 3h1v1h-1zM6 3h5v1h-5zM14 3h1v1h-1zM17 3h1v1h-1zM19 3h1v1h-1zM21 3h1v1h-1zM1 4h1v1h-1zM4 4h1v1h-1zM6 4h1v1h-1zM10 4h1v1h-1zM12 4h1v1h-1zM19 4h1v1h-1zM1 5h4v1h-4zM6 5h1v1h-1zM10 5h1v1h-1zM13 5h1v1h-1zM15 5h1v1h-1zM17 5h6v1h-6zM1 6h1v1h-1zM4 6h1v1h-1zM7 6h1v1h-1zM9 6h1v1h-1zM15 6h1v1h-1zM17 6h1v1h-1zM22 6h1v1h-1zM1 7h4v1h-4zM7 7h1v1h-1zM9 7h1v1h-1zM14 7h1v1h-1zM17 7h6v1h-6zM1 8h1v1h-1zM4 8h1v1h-1zM8 8h1v1h-1zM14 8h1v1h-1zM17 8h1v1h-1zM22 8h1v1h-1zM1 9h1v1h-1zM4 9h2v1h-2zM8 9h1v1h-1zM12 9h2v1h-2zM17 9h6v1h-6zM0 10h5v1h-5zM7 10h1v1h-1zM9 10h1v1h-1zM13 10h1v1h-1zM17 10h1v1h-1zM22 10h1v1h-1zM4 11h1v1h-1zM6 11h1v1h-1zM9 11h1v1h-1zM13 11h1v1h-1zM17 11h1v1h-1zM22 11h1v1h-1zM4 12h2v1h-2zM10 12h1v1h-1zM13 12h1v1h-1zM17 12h1v1h-1zM21 12h2v1h-2z"/><text x="2.5" y="343" font-family="Liberation Sans" font-weight="bold" font-size="15.5" fill="#ffffff" stroke="#1890dc" stroke-width="3.4" stroke-linejoin="round" paint-order="stroke" textLength="110" lengthAdjust="spacingAndGlyphs">www.rjzxw.com</text></svg></body></html>
